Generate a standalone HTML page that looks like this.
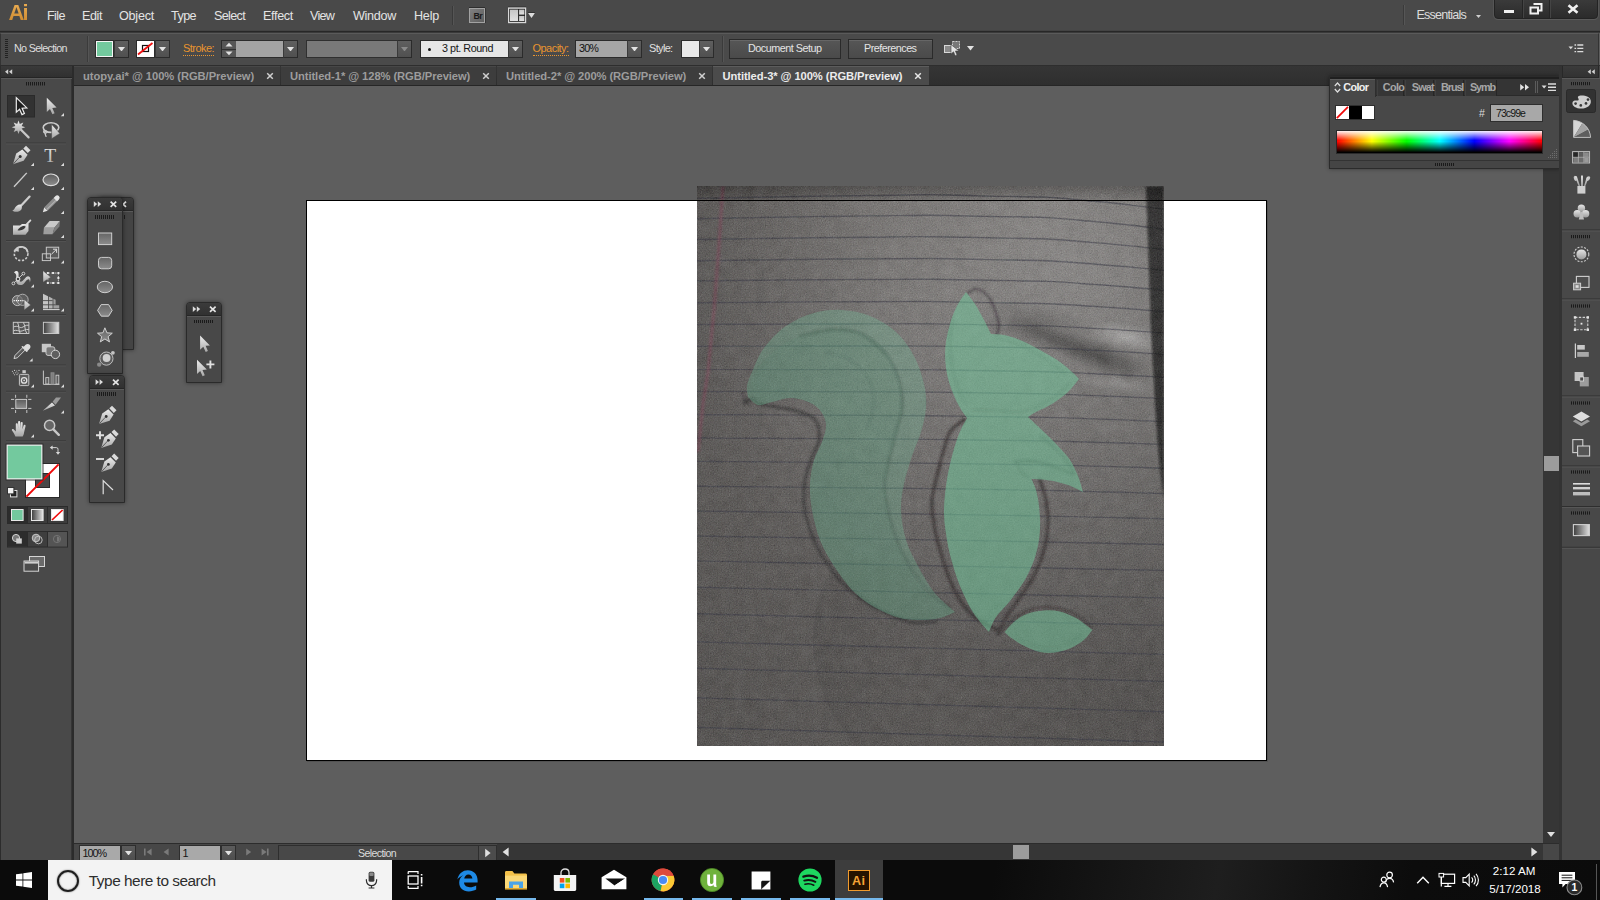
<!DOCTYPE html>
<html>
<head>
<meta charset="utf-8">
<title>Ai</title>
<style>
*{box-sizing:border-box;margin:0;padding:0}
html,body{width:1600px;height:900px;overflow:hidden;background:#5e5e5e;font-family:"Liberation Sans",sans-serif;}
.abs{position:absolute}
#root{position:absolute;left:0;top:0;width:1600px;height:900px;overflow:hidden;background:#5e5e5e}
.t{position:absolute;white-space:nowrap;line-height:1;color:#e6e6e6}
/* bars */
#menubar{left:0;top:0;width:1600px;height:31px;background:#494949}
#menuline{left:0;top:30px;width:1600px;height:3px;background:linear-gradient(#434343 0 1px,#272727 1px 2px,#3a3a3a 2px 3px)}
#ctrlbar{left:0;top:33px;width:1599px;height:32px;background:#4a4a4a;border-left:1px solid #333;border-top:1px solid #5a5a5a;border-right:1px solid #333}
#ctrlline{left:0;top:65px;width:1600px;height:1px;background:#2e2e2e}
#tabbar{left:74px;top:66px;width:1485px;height:20px;background:linear-gradient(#353535,#2e2e2e)}
.tab{position:absolute;top:0;height:19px;background:#3b3b3b;border-right:1px solid #2a2a2a}
.tab.on{background:#4b4b4b}
#toolbar{left:0;top:66px;width:72px;height:794px;background:#494949;border-right:1px solid #353535}
#tbgap{left:72px;top:66px;width:2px;height:794px;background:#2b2b2b}
#tbhead{left:0;top:66px;width:72px;height:13px;background:linear-gradient(#3a3a3a 0,#303030 11px,#242424 11px,#242424 12px,#585858 12px)}
#canvas{left:74px;top:86px;width:1468px;height:757px;background:#5e5e5e}
#artboard{left:306px;top:200px;width:961px;height:561px;background:#fff}
#statusbar{left:74px;top:843px;width:1485px;height:17px;background:#474747;border-top:1px solid #2c2c2c}
#vscroll{left:1543px;top:86px;width:16px;height:757px;background:#363636}
#dock{left:1562px;top:66px;width:38px;height:794px;background:#484848}
#dockgap{left:1559px;top:66px;width:3px;height:794px;background:#333}
#taskbar{left:0;top:860px;width:1600px;height:40px;background:#0e0e0e}
</style>
</head>
<body>
<div id="root">
<!-- MENUBAR -->
<div id="menubar" class="abs"></div>
<div id="menuline" class="abs"></div>
<span class="t" style="left:8.5px;top:2.4px;font-size:22px;font-weight:bold;letter-spacing:-1.9px;background:linear-gradient(#edb055,#c9852c);-webkit-background-clip:text;background-clip:text;color:transparent;">Ai</span>
<span class="t" style="left:47.0px;top:10.1px;font-size:12.6px;letter-spacing:-0.58px;color:#e4e4e4;">File</span>
<span class="t" style="left:82.0px;top:10.1px;font-size:12.6px;letter-spacing:-0.43px;color:#e4e4e4;">Edit</span>
<span class="t" style="left:119.0px;top:10.1px;font-size:12.6px;letter-spacing:-0.24px;color:#e4e4e4;">Object</span>
<span class="t" style="left:171.0px;top:10.1px;font-size:12.6px;letter-spacing:-0.58px;color:#e4e4e4;">Type</span>
<span class="t" style="left:214.0px;top:10.1px;font-size:12.6px;letter-spacing:-0.67px;color:#e4e4e4;">Select</span>
<span class="t" style="left:263.0px;top:10.1px;font-size:12.6px;letter-spacing:-0.33px;color:#e4e4e4;">Effect</span>
<span class="t" style="left:310.0px;top:10.1px;font-size:12.6px;letter-spacing:-0.77px;color:#e4e4e4;">View</span>
<span class="t" style="left:353.0px;top:10.1px;font-size:12.6px;letter-spacing:-0.30px;color:#e4e4e4;">Window</span>
<span class="t" style="left:414.0px;top:10.1px;font-size:12.6px;letter-spacing:-0.23px;color:#e4e4e4;">Help</span>
<div class="abs" style="left:452px;top:6px;width:1px;height:19px;background:#3a3a3a;"></div>
<div class="abs" style="left:453px;top:6px;width:1px;height:19px;background:#555;"></div>
<div class="abs" style="left:469px;top:7.5px;width:16px;height:15.5px;background:linear-gradient(135deg,#808080,#5e5e5e);border:1px solid #a2a2a2;box-shadow:0 -1px 0 #2e2e2e,1px 0 0 #333"></div>
<span class="t" style="left:473.6px;top:11.5px;font-size:8.8px;letter-spacing:-0.79px;color:#1a1a1a;font-weight:bold;">Br</span>
<svg class="abs" style="left:507px;top:6px" width="30" height="19" viewBox="507 6 30 19"><defs><linearGradient id="arg" x1="0" y1="0" x2="0" y2="1"><stop offset="0" stop-color="#c4c4c4"/><stop offset="1" stop-color="#e0e0e0"/></linearGradient></defs><rect x="508" y="6.6" width="18.2" height="1" fill="#2c2c2c"/><rect x="508" y="7.4" width="18.2" height="15.8" fill="#d8d8d8"/><rect x="509.2" y="8.8" width="15.8" height="13" fill="#1e1e1e"/><rect x="509.9" y="9.6" width="8.2" height="11.4" fill="url(#arg)"/><rect x="519.1" y="9.6" width="5.3" height="5" fill="url(#arg)"/><rect x="519.1" y="15.9" width="5.3" height="5.1" fill="url(#arg)"/><path d="M528,12.2h7v0.8h-7z" fill="#2e2e2e"/><path d="M528.1,12.9h6.8l-3.4,5z" fill="#dcdcdc"/></svg>
<div class="abs" style="left:1403px;top:5px;width:1px;height:20px;background:#3a3a3a;"></div>
<div class="abs" style="left:1404px;top:5px;width:1px;height:20px;background:#565656;"></div>
<span class="t" style="left:1416.5px;top:8.5px;font-size:12.6px;letter-spacing:-0.79px;color:#dcdcdc;">Essentials</span>
<svg class="abs" style="left:1476.0px;top:14.8px" width="5" height="3" viewBox="0 0 5 3"><path d="M0,0H5L2.5,3Z" fill="#cfcfcf"/></svg>
<div class="abs" style="left:1494px;top:-3px;width:104px;height:22px;border-radius:0 0 4px 4px;background:linear-gradient(#3c3c3c,#2b2b2b);border:1px solid #232323;box-shadow:0 1px 0 #5a5a5a, 1px 0 0 #555, -1px 0 0 #555"></div>
<div class="abs" style="left:1522px;top:0px;width:1px;height:18px;background:#242424;"></div>
<div class="abs" style="left:1523px;top:0px;width:1px;height:18px;background:#444;"></div>
<div class="abs" style="left:1549px;top:0px;width:1px;height:18px;background:#242424;"></div>
<div class="abs" style="left:1550px;top:0px;width:1px;height:18px;background:#444;"></div>
<div class="abs" style="left:1504px;top:10px;width:10px;height:3px;background:#f0f0f0;"></div>
<svg class="abs" style="left:1529px;top:3px" width="14" height="12" viewBox="0 0 14 12"><path d="M4.5,1h8v6.5h-2.5" fill="none" stroke="#f0f0f0" stroke-width="2"/><rect x="1.5" y="4.5" width="7.5" height="6" fill="none" stroke="#f0f0f0" stroke-width="2"/></svg>
<svg class="abs" style="left:1567px;top:4px" width="12" height="10" viewBox="0 0 12 10"><path d="M1.5,1.2L10.5,8.8M10.5,1.2L1.5,8.8" stroke="#f0f0f0" stroke-width="2.6" fill="none"/></svg>
<div id="ctrlbar" class="abs"></div>
<div id="ctrlline" class="abs"></div>
<div class="abs" style="left:5px;top:39px;width:3px;height:20px;background:repeating-linear-gradient(#222 0 1px,transparent 1px 2px)"></div>
<span class="t" style="left:14.0px;top:42.9px;font-size:10.8px;letter-spacing:-0.69px;color:#dedede;">No Selection</span>
<div class="abs" style="left:87px;top:36px;width:1px;height:26px;background:#3b3b3b;"></div>
<div class="abs" style="left:88px;top:36px;width:1px;height:26px;background:#555;"></div>
<div class="abs" style="left:96px;top:41px;width:16.5px;height:16px;background:#73c99e;border:1px solid #f4f4f4;outline:1px solid #2b2b2b;outline-offset:0"></div>
<div class="abs" style="left:113.5px;top:40px;width:15.5px;height:18px;background:linear-gradient(#5f5f5f,#505050);border:1px solid #2b2b2b;border-left:1px solid #3a3a3a"></div><svg class="abs" style="left:118.0px;top:46.8px" width="7" height="4.5" viewBox="0 0 7 4.5"><path d="M0,0H7L3.5,4.5Z" fill="#e2e2e2"/></svg>
<div class="abs" style="left:137px;top:41px;width:17px;height:16px;background:#fff;outline:1px solid #2b2b2b"></div>
<svg class="abs" style="left:136px;top:40px" width="19" height="18" viewBox="0 0 19 18"><rect x="6.5" y="5.5" width="6" height="6" fill="none" stroke="#111" stroke-width="1.2"/><path d="M2,14.5L16.5,3" stroke="#f01010" stroke-width="1.8"/></svg>
<div class="abs" style="left:154.5px;top:40px;width:15.5px;height:18px;background:linear-gradient(#5f5f5f,#505050);border:1px solid #2b2b2b;border-left:1px solid #3a3a3a"></div><svg class="abs" style="left:159.1px;top:46.8px" width="7" height="4.5" viewBox="0 0 7 4.5"><path d="M0,0H7L3.5,4.5Z" fill="#e2e2e2"/></svg>
<span class="t" style="left:183.0px;top:42.7px;font-size:11px;letter-spacing:-0.55px;color:#e9952f;border-bottom:1px dotted #e9952f;padding-bottom:1px;">Stroke:</span>
<div class="abs" style="left:221px;top:40px;width:16px;height:18px;background:#565656;border:1px solid #2b2b2b"></div>
<div class="abs" style="left:222px;top:48.5px;width:14px;height:1px;background:#2f2f2f;"></div>
<svg class="abs" style="left:225px;top:42px" width="8" height="14" viewBox="0 0 8 14"><path d="M0.5,4.5h7L4,0.8z" fill="#e2e2e2"/><path d="M0.5,9.5h7L4,13.2z" fill="#e2e2e2"/></svg>
<div class="abs" style="left:236px;top:40px;width:48px;height:18px;background:#a3a3a3;border:1px solid #2b2b2b;border-left:none"></div>
<div class="abs" style="left:283px;top:40px;width:15px;height:18px;background:linear-gradient(#5f5f5f,#505050);border:1px solid #2b2b2b;border-left:1px solid #3a3a3a"></div><svg class="abs" style="left:287.3px;top:46.8px" width="7" height="4.5" viewBox="0 0 7 4.5"><path d="M0,0H7L3.5,4.5Z" fill="#e2e2e2"/></svg>
<div class="abs" style="left:306px;top:40px;width:92px;height:18px;background:#797979;border:1px solid #2f2f2f"></div>
<div class="abs" style="left:397px;top:40px;width:15px;height:18px;background:linear-gradient(#5f5f5f,#505050);border:1px solid #2b2b2b;border-left:1px solid #3a3a3a"></div><svg class="abs" style="left:401.3px;top:46.8px" width="7" height="4.5" viewBox="0 0 7 4.5"><path d="M0,0H7L3.5,4.5Z" fill="#8a8a8a"/></svg>
<div class="abs" style="left:420px;top:40px;width:89px;height:18px;background:#e6e6e6;border:1px solid #2b2b2b"></div>
<div class="abs" style="left:427.5px;top:47.5px;width:3px;height:3px;border-radius:2px;background:#111"></div>
<span class="t" style="left:442.0px;top:42.9px;font-size:10.8px;letter-spacing:-0.44px;color:#161616;">3 pt. Round</span>
<div class="abs" style="left:508px;top:40px;width:15px;height:18px;background:linear-gradient(#5f5f5f,#505050);border:1px solid #2b2b2b;border-left:1px solid #3a3a3a"></div><svg class="abs" style="left:512.3px;top:46.8px" width="7" height="4.5" viewBox="0 0 7 4.5"><path d="M0,0H7L3.5,4.5Z" fill="#e2e2e2"/></svg>
<span class="t" style="left:532.5px;top:42.7px;font-size:11px;letter-spacing:-0.54px;color:#e9952f;border-bottom:1px dotted #e9952f;padding-bottom:1px;">Opacity:</span>
<div class="abs" style="left:575px;top:40px;width:53px;height:18px;background:#a6a6a6;border:1px solid #2b2b2b"></div>
<span class="t" style="left:579.0px;top:42.9px;font-size:10.8px;letter-spacing:-0.87px;color:#111;">30%</span>
<div class="abs" style="left:627px;top:40px;width:15px;height:18px;background:linear-gradient(#5f5f5f,#505050);border:1px solid #2b2b2b;border-left:1px solid #3a3a3a"></div><svg class="abs" style="left:631.3px;top:46.8px" width="7" height="4.5" viewBox="0 0 7 4.5"><path d="M0,0H7L3.5,4.5Z" fill="#e2e2e2"/></svg>
<span class="t" style="left:649.0px;top:42.7px;font-size:11px;letter-spacing:-0.67px;color:#e0e0e0;">Style:</span>
<div class="abs" style="left:681px;top:40px;width:19px;height:18px;background:#e8e8e8;border:1px solid #2b2b2b"></div>
<div class="abs" style="left:699px;top:40px;width:15px;height:18px;background:linear-gradient(#5f5f5f,#505050);border:1px solid #2b2b2b;border-left:1px solid #3a3a3a"></div><svg class="abs" style="left:703.3px;top:46.8px" width="7" height="4.5" viewBox="0 0 7 4.5"><path d="M0,0H7L3.5,4.5Z" fill="#e2e2e2"/></svg>
<div class="abs" style="left:722px;top:36px;width:1px;height:26px;background:#3b3b3b;"></div>
<div class="abs" style="left:723px;top:36px;width:1px;height:26px;background:#555;"></div>
<div class="abs" style="left:729px;top:39px;width:112px;height:20px;background:linear-gradient(#565656,#4a4a4a);border:1px solid #2a2a2a;box-shadow:inset 0 1px 0 #666"></div>
<span class="t" style="left:748.0px;top:42.9px;font-size:10.8px;letter-spacing:-0.50px;color:#e4e4e4;">Document Setup</span>
<div class="abs" style="left:848px;top:39px;width:85px;height:20px;background:linear-gradient(#565656,#4a4a4a);border:1px solid #2a2a2a;box-shadow:inset 0 1px 0 #666"></div>
<span class="t" style="left:864.0px;top:42.9px;font-size:10.8px;letter-spacing:-0.52px;color:#e4e4e4;">Preferences</span>
<svg class="abs" style="left:943px;top:40px" width="20" height="18" viewBox="0 0 20 18"><rect x="1.5" y="5.5" width="7" height="7" fill="#8a8a8a" stroke="#d8d8d8"/><rect x="9.5" y="1.5" width="7" height="7" fill="#777" stroke="#d0d0d0" stroke-dasharray="2 1"/><path d="M8,4.5l8,6.5h-3.6l1.6,4l-1.8,0.8l-1.7,-4l-2.5,2.3z" fill="#e4e4e4" stroke="#444" stroke-width="0.6"/></svg>
<svg class="abs" style="left:967.0px;top:46.2px" width="7" height="4.5" viewBox="0 0 7 4.5"><path d="M0,0H7L3.5,4.5Z" fill="#e2e2e2"/></svg>
<svg class="abs" style="left:1568px;top:44px" width="16" height="9" viewBox="0 0 16 9"><path d="M0.5,2.5h4.6l-2.3,2.8z" fill="#dcdcdc"/><path d="M6.5,1h1.6M9.3,1h6M6.5,4.3h1.6M9.3,4.3h6M6.5,7.6h1.6M9.3,7.6h6" stroke="#dcdcdc" stroke-width="1.3"/></svg>
<!-- CANVAS -->
<div id="canvas" class="abs"></div>
<div id="artboard" class="abs"></div>
<svg class="abs" style="left:697px;top:186px" width="467" height="560" viewBox="697 186 467 560">
<defs>
<radialGradient id="hl" gradientUnits="userSpaceOnUse" cx="1080" cy="275" r="400"><stop offset="0" stop-color="#fff" stop-opacity="0.25"/><stop offset="0.5" stop-color="#fff" stop-opacity="0.13"/><stop offset="1" stop-color="#fff" stop-opacity="0"/></radialGradient>
<linearGradient id="dk" gradientUnits="userSpaceOnUse" x1="800" y1="420" x2="1100" y2="760"><stop offset="0" stop-color="#000" stop-opacity="0"/><stop offset="1" stop-color="#000" stop-opacity="0.2"/></linearGradient>
<linearGradient id="lf" gradientUnits="userSpaceOnUse" x1="697" y1="0" x2="880" y2="0"><stop offset="0" stop-color="#000" stop-opacity="0.12"/><stop offset="1" stop-color="#000" stop-opacity="0"/></linearGradient>
<radialGradient id="sp" cx="0.5" cy="0.5" r="0.5"><stop offset="0" stop-color="#fff" stop-opacity="1"/><stop offset="1" stop-color="#fff" stop-opacity="0"/></radialGradient>
<radialGradient id="sd" cx="0.5" cy="0.5" r="0.5"><stop offset="0" stop-color="#000" stop-opacity="1"/><stop offset="1" stop-color="#000" stop-opacity="0"/></radialGradient>
<linearGradient id="edgeT" x1="0" x2="0" y1="0" y2="1"><stop offset="0" stop-color="#000" stop-opacity="0.22"/><stop offset="1" stop-color="#000" stop-opacity="0"/></linearGradient>
<filter id="grain" x="0" y="0" width="100%" height="100%" color-interpolation-filters="sRGB"><feTurbulence type="fractalNoise" baseFrequency="0.75" numOctaves="2" seed="7" result="n"/><feColorMatrix in="n" type="matrix" values="0.4 0.35 0.25 0 0  0.3 0.45 0.25 0 0  0.3 0.35 0.35 0 0  0 0 0 0 1" result="n2"/><feComposite in="SourceGraphic" in2="n2" operator="arithmetic" k1="0" k2="1" k3="0.3" k4="-0.15" result="g1"/><feTurbulence type="fractalNoise" baseFrequency="0.09" numOctaves="2" seed="11" result="m"/><feColorMatrix in="m" type="matrix" values="0.34 0.33 0.33 0 0  0.33 0.34 0.33 0 0  0.33 0.33 0.34 0 0  0 0 0 0 1" result="m2"/><feComposite in="g1" in2="m2" operator="arithmetic" k1="0" k2="1" k3="0.1" k4="-0.05"/></filter>
<filter id="b1"><feGaussianBlur stdDeviation="1.2"/></filter>
<filter id="b2"><feGaussianBlur stdDeviation="0.6"/></filter>
<filter id="b3"><feGaussianBlur stdDeviation="1.3"/></filter>
</defs>
<g opacity="0.93"><g filter="url(#grain)">
<rect x="697" y="186" width="467" height="560" fill="#5c5957"/>
<rect x="697" y="186" width="467" height="560" fill="url(#hl)"/>
<rect x="697" y="186" width="467" height="560" fill="url(#dk)"/>
<rect x="697" y="186" width="467" height="560" fill="url(#lf)"/>
<ellipse cx="1128" cy="337" rx="40" ry="14" transform="rotate(14 1128 337)" fill="url(#sp)" opacity="0.32"/>
<ellipse cx="1118" cy="384" rx="40" ry="9" transform="rotate(8 1118 384)" fill="url(#sp)" opacity="0.14"/>
<ellipse cx="1098" cy="356" rx="58" ry="16" transform="rotate(20 1098 356)" fill="url(#sd)" opacity="0.42"/>
<ellipse cx="1050" cy="338" rx="50" ry="12" transform="rotate(22 1050 338)" fill="url(#sd)" opacity="0.22"/>
<ellipse cx="1036" cy="326" rx="62" ry="24" transform="rotate(10 1036 326)" fill="url(#sd)" opacity="0.2"/>
<g fill="none" stroke="#2c2e3a" stroke-opacity="0.5" stroke-width="1.4" filter="url(#b2)">
<path d="M697.0,198.4C706.7,198.2 735.9,197.7 755.4,197.3C774.8,197.0 794.3,196.5 813.8,196.2C833.2,195.9 852.7,195.8 872.1,195.5C891.6,195.3 911.0,194.7 930.5,194.8C950.0,194.9 969.4,195.7 988.9,196.1C1008.3,196.5 1029.7,196.5 1047.2,197.3C1064.8,198.2 1079.9,200.0 1094.0,201.3C1108.0,202.6 1119.6,203.7 1131.3,205.1C1143.0,206.4 1158.6,208.5 1164.0,209.2"/>
<path d="M697.0,218.7C706.7,218.5 735.9,218.0 755.4,217.6C774.8,217.3 794.3,216.9 813.8,216.6C833.2,216.3 852.7,216.1 872.1,215.9C891.6,215.7 911.0,215.1 930.5,215.2C950.0,215.3 969.4,216.0 988.9,216.4C1008.3,216.8 1029.7,216.8 1047.2,217.6C1064.8,218.5 1079.9,220.3 1094.0,221.5C1108.0,222.8 1119.6,223.9 1131.3,225.2C1143.0,226.5 1158.6,228.5 1164.0,229.2"/>
<path d="M697.0,239.5C706.7,239.4 735.9,238.9 755.4,238.6C774.8,238.3 794.3,238.0 813.8,237.7C833.2,237.5 852.7,237.4 872.1,237.2C891.6,237.0 911.0,236.5 930.5,236.7C950.0,236.8 969.4,237.4 988.9,237.8C1008.3,238.2 1029.7,238.2 1047.2,239.0C1064.8,239.8 1079.9,241.4 1094.0,242.6C1108.0,243.7 1119.6,244.7 1131.3,245.9C1143.0,247.1 1158.6,249.0 1164.0,249.6"/>
<path d="M697.0,260.7C706.7,260.6 735.9,260.2 755.4,260.0C774.8,259.8 794.3,259.5 813.8,259.3C833.2,259.1 852.7,259.0 872.1,258.9C891.6,258.7 911.0,258.4 930.5,258.5C950.0,258.6 969.4,259.2 988.9,259.6C1008.3,260.0 1029.7,260.0 1047.2,260.7C1064.8,261.5 1079.9,262.9 1094.0,264.0C1108.0,265.1 1119.6,266.0 1131.3,267.1C1143.0,268.1 1158.6,269.9 1164.0,270.4"/>
<path d="M697.0,280.9C706.7,280.8 735.9,280.5 755.4,280.3C774.8,280.2 794.3,279.9 813.8,279.8C833.2,279.7 852.7,279.6 872.1,279.5C891.6,279.4 911.0,279.1 930.5,279.2C950.0,279.4 969.4,280.0 988.9,280.3C1008.3,280.7 1029.7,280.7 1047.2,281.4C1064.8,282.1 1079.9,283.4 1094.0,284.4C1108.0,285.4 1119.6,286.2 1131.3,287.2C1143.0,288.2 1158.6,289.8 1164.0,290.3"/>
<path d="M697.0,302.7C706.7,302.6 735.9,302.4 755.4,302.3C774.8,302.2 794.3,302.0 813.8,301.9C833.2,301.8 852.7,301.8 872.1,301.7C891.6,301.7 911.0,301.4 930.5,301.6C950.0,301.7 969.4,302.3 988.9,302.6C1008.3,303.0 1029.7,303.1 1047.2,303.7C1064.8,304.3 1079.9,305.5 1094.0,306.4C1108.0,307.3 1119.6,308.0 1131.3,308.9C1143.0,309.8 1158.6,311.2 1164.0,311.7"/>
<path d="M697.0,324.5C706.7,324.5 735.9,324.3 755.4,324.2C774.8,324.2 794.3,324.0 813.8,324.0C833.2,323.9 852.7,324.0 872.1,323.9C891.6,323.9 911.0,323.7 930.5,323.9C950.0,324.1 969.4,324.6 988.9,324.9C1008.3,325.2 1029.7,325.3 1047.2,325.9C1064.8,326.5 1079.9,327.6 1094.0,328.4C1108.0,329.1 1119.6,329.8 1131.3,330.6C1143.0,331.4 1158.6,332.7 1164.0,333.1"/>
<path d="M697.0,346.2C706.7,346.2 735.9,346.1 755.4,346.1C774.8,346.0 794.3,346.0 813.8,346.0C833.2,345.9 852.7,346.0 872.1,346.0C891.6,346.0 911.0,345.9 930.5,346.1C950.0,346.2 969.4,346.7 988.9,347.0C1008.3,347.4 1029.7,347.5 1047.2,348.0C1064.8,348.5 1079.9,349.5 1094.0,350.2C1108.0,350.9 1119.6,351.5 1131.3,352.2C1143.0,352.9 1158.6,354.0 1164.0,354.4"/>
<path d="M697.0,369.6C706.7,369.6 735.9,369.6 755.4,369.6C774.8,369.6 794.3,369.6 813.8,369.6C833.2,369.6 852.7,369.7 872.1,369.8C891.6,369.8 911.0,369.7 930.5,369.9C950.0,370.1 969.4,370.5 988.9,370.8C1008.3,371.1 1029.7,371.3 1047.2,371.8C1064.8,372.2 1079.9,373.1 1094.0,373.7C1108.0,374.3 1119.6,374.8 1131.3,375.5C1143.0,376.1 1158.6,377.0 1164.0,377.4"/>
<path d="M697.0,391.4C706.7,391.4 735.9,391.5 755.4,391.5C774.8,391.5 794.3,391.6 813.8,391.6C833.2,391.7 852.7,391.8 872.1,391.9C891.6,391.9 911.0,391.9 930.5,392.1C950.0,392.3 969.4,392.7 988.9,393.0C1008.3,393.3 1029.7,393.4 1047.2,393.9C1064.8,394.3 1079.9,395.0 1094.0,395.6C1108.0,396.1 1119.6,396.6 1131.3,397.1C1143.0,397.6 1158.6,398.5 1164.0,398.8"/>
<path d="M697.0,414.7C706.7,414.7 735.9,414.8 755.4,414.9C774.8,415.0 794.3,415.0 813.8,415.1C833.2,415.2 852.7,415.3 872.1,415.4C891.6,415.5 911.0,415.6 930.5,415.8C950.0,415.9 969.4,416.3 988.9,416.6C1008.3,416.9 1029.7,417.0 1047.2,417.4C1064.8,417.8 1079.9,418.4 1094.0,418.9C1108.0,419.4 1119.6,419.8 1131.3,420.2C1143.0,420.7 1158.6,421.4 1164.0,421.6"/>
<path d="M697.0,438.0C706.7,438.1 735.9,438.2 755.4,438.3C774.8,438.4 794.3,438.5 813.8,438.6C833.2,438.7 852.7,438.9 872.1,439.0C891.6,439.1 911.0,439.2 930.5,439.4C950.0,439.6 969.4,439.9 988.9,440.2C1008.3,440.4 1029.7,440.6 1047.2,440.9C1064.8,441.3 1079.9,441.8 1094.0,442.2C1108.0,442.6 1119.6,442.9 1131.3,443.3C1143.0,443.7 1158.6,444.3 1164.0,444.5"/>
<path d="M697.0,461.4C706.7,461.5 735.9,461.7 755.4,461.8C774.8,462.0 794.3,462.1 813.8,462.3C833.2,462.4 852.7,462.6 872.1,462.8C891.6,462.9 911.0,463.0 930.5,463.2C950.0,463.5 969.4,463.8 988.9,464.1C1008.3,464.4 1029.7,464.6 1047.2,464.9C1064.8,465.3 1079.9,465.8 1094.0,466.1C1108.0,466.5 1119.6,466.9 1131.3,467.2C1143.0,467.6 1158.6,468.1 1164.0,468.3"/>
<path d="M697.0,486.2C706.7,486.3 735.9,486.6 755.4,486.8C774.8,487.0 794.3,487.2 813.8,487.4C833.2,487.6 852.7,487.8 872.1,488.0C891.6,488.2 911.0,488.4 930.5,488.6C950.0,488.9 969.4,489.2 988.9,489.5C1008.3,489.8 1029.7,490.1 1047.2,490.4C1064.8,490.8 1079.9,491.2 1094.0,491.6C1108.0,491.9 1119.6,492.2 1131.3,492.6C1143.0,492.9 1158.6,493.4 1164.0,493.6"/>
<path d="M697.0,511.1C706.7,511.2 735.9,511.6 755.4,511.8C774.8,512.1 794.3,512.3 813.8,512.6C833.2,512.8 852.7,513.1 872.1,513.4C891.6,513.6 911.0,513.9 930.5,514.1C950.0,514.4 969.4,514.8 988.9,515.1C1008.3,515.4 1029.7,515.7 1047.2,516.1C1064.8,516.4 1079.9,516.8 1094.0,517.1C1108.0,517.5 1119.6,517.7 1131.3,518.0C1143.0,518.3 1158.6,518.8 1164.0,518.9"/>
<path d="M697.0,536.0C706.7,536.2 735.9,536.6 755.4,537.0C774.8,537.3 794.3,537.6 813.8,537.9C833.2,538.2 852.7,538.6 872.1,538.9C891.6,539.2 911.0,539.5 930.5,539.9C950.0,540.2 969.4,540.6 988.9,540.9C1008.3,541.3 1029.7,541.6 1047.2,542.0C1064.8,542.3 1079.9,542.7 1094.0,543.0C1108.0,543.3 1119.6,543.5 1131.3,543.8C1143.0,544.1 1158.6,544.4 1164.0,544.5"/>
<path d="M697.0,560.9C706.7,561.1 735.9,561.7 755.4,562.1C774.8,562.5 794.3,562.9 813.8,563.3C833.2,563.7 852.7,564.1 872.1,564.5C891.6,564.9 911.0,565.3 930.5,565.7C950.0,566.1 969.4,566.5 988.9,566.9C1008.3,567.2 1029.7,567.7 1047.2,568.0C1064.8,568.4 1079.9,568.7 1094.0,569.0C1108.0,569.3 1119.6,569.5 1131.3,569.8C1143.0,570.0 1158.6,570.3 1164.0,570.4"/>
<path d="M697.0,587.3C706.7,587.5 735.9,588.2 755.4,588.6C774.8,589.1 794.3,589.5 813.8,589.9C833.2,590.4 852.7,590.8 872.1,591.3C891.6,591.7 911.0,592.1 930.5,592.6C950.0,593.0 969.4,593.5 988.9,593.9C1008.3,594.3 1029.7,594.8 1047.2,595.2C1064.8,595.6 1079.9,596.0 1094.0,596.3C1108.0,596.6 1119.6,596.9 1131.3,597.1C1143.0,597.4 1158.6,597.7 1164.0,597.9"/>
<path d="M697.0,613.8C706.7,614.0 735.9,614.8 755.4,615.2C774.8,615.7 794.3,616.2 813.8,616.7C833.2,617.2 852.7,617.7 872.1,618.1C891.6,618.6 911.0,619.1 930.5,619.6C950.0,620.1 969.4,620.6 988.9,621.0C1008.3,621.5 1029.7,622.1 1047.2,622.5C1064.8,622.9 1079.9,623.3 1094.0,623.7C1108.0,624.0 1119.6,624.3 1131.3,624.6C1143.0,624.9 1158.6,625.3 1164.0,625.4"/>
<path d="M697.0,641.8C706.7,642.1 735.9,642.9 755.4,643.4C774.8,643.9 794.3,644.4 813.8,645.0C833.2,645.5 852.7,646.0 872.1,646.5C891.6,647.1 911.0,647.6 930.5,648.1C950.0,648.7 969.4,649.2 988.9,649.7C1008.3,650.2 1029.7,650.8 1047.2,651.3C1064.8,651.8 1079.9,652.2 1094.0,652.6C1108.0,652.9 1119.6,653.2 1131.3,653.6C1143.0,653.9 1158.6,654.3 1164.0,654.4"/>
<path d="M697.0,668.2C706.7,668.5 735.9,669.3 755.4,669.9C774.8,670.4 794.3,671.0 813.8,671.5C833.2,672.1 852.7,672.6 872.1,673.2C891.6,673.7 911.0,674.3 930.5,674.8C950.0,675.4 969.4,675.9 988.9,676.5C1008.3,677.0 1029.7,677.6 1047.2,678.1C1064.8,678.6 1079.9,679.1 1094.0,679.5C1108.0,679.9 1119.6,680.2 1131.3,680.5C1143.0,680.8 1158.6,681.3 1164.0,681.4"/>
<path d="M697.0,697.8C706.7,698.1 735.9,699.0 755.4,699.5C774.8,700.1 794.3,700.7 813.8,701.3C833.2,701.9 852.7,702.4 872.1,703.0C891.6,703.6 911.0,704.2 930.5,704.8C950.0,705.3 969.4,705.9 988.9,706.5C1008.3,707.1 1029.7,707.7 1047.2,708.2C1064.8,708.8 1079.9,709.2 1094.0,709.6C1108.0,710.0 1119.6,710.4 1131.3,710.7C1143.0,711.1 1158.6,711.6 1164.0,711.7"/>
<path d="M697.0,727.4C706.7,727.7 735.9,728.6 755.4,729.2C774.8,729.8 794.3,730.4 813.8,731.0C833.2,731.7 852.7,732.3 872.1,732.9C891.6,733.5 911.0,734.1 930.5,734.7C950.0,735.3 969.4,735.9 988.9,736.5C1008.3,737.1 1029.7,737.8 1047.2,738.3C1064.8,738.9 1079.9,739.4 1094.0,739.8C1108.0,740.2 1119.6,740.6 1131.3,741.0C1143.0,741.3 1158.6,741.8 1164.0,742.0"/>
</g>
<path d="M723,186 L718.8,248 L714,310 L708,372 L703,404 L698,452" fill="none" stroke="#70404e" stroke-opacity="0.7" stroke-width="3" filter="url(#b1)"/>
<path d="M1146,186 L1164,186 L1164,500 L1160,470 L1156,420 L1151,330 Z" fill="#0a0a0a" opacity="0.72" filter="url(#b3)"/>
<rect x="697" y="186" width="467" height="14" fill="url(#edgeT)"/>
<defs><linearGradient id="cg" gradientUnits="userSpaceOnUse" x1="813" y1="0" x2="940" y2="0"><stop offset="0" stop-color="#000" stop-opacity="0.075"/><stop offset="1" stop-color="#000" stop-opacity="0"/></linearGradient><clipPath id="cc"><rect x="697" y="560" width="263" height="186"/></clipPath></defs><circle cx="960" cy="640" r="147" fill="url(#cg)" clip-path="url(#cc)"/>
<path d="M748.0,397.0C748.3,394.8 748.0,389.2 750.0,384.0C752.0,378.8 755.3,372.0 760.0,366.0C764.7,360.0 771.3,353.0 778.0,348.0C784.7,343.0 791.3,339.2 800.0,336.0C808.7,332.8 820.7,329.8 830.0,329.0C839.3,328.2 848.0,328.7 856.0,331.0C864.0,333.3 871.8,337.7 878.0,343.0C884.2,348.3 889.2,355.5 893.0,363.0C896.8,370.5 899.5,380.2 901.0,388.0C902.5,395.8 902.7,402.3 902.0,410.0C901.3,417.7 899.0,426.0 897.0,434.0C895.0,442.0 891.8,449.7 890.0,458.0C888.2,466.3 886.5,475.7 886.0,484.0C885.5,492.3 885.7,499.3 887.0,508.0C888.3,516.7 890.8,527.0 894.0,536.0C897.2,545.0 901.3,553.3 906.0,562.0C910.7,570.7 913.8,579.7 922.0,588.0C930.2,596.3 949.5,608.0 955.0,612.0C952.5,613.0 945.2,616.7 940.0,618.0C934.8,619.3 930.7,620.0 924.0,620.0C917.3,620.0 908.0,620.0 900.0,618.0C892.0,616.0 883.7,612.3 876.0,608.0C868.3,603.7 861.0,599.0 854.0,592.0C847.0,585.0 839.7,574.7 834.0,566.0C828.3,557.3 823.7,549.3 820.0,540.0C816.3,530.7 813.7,519.3 812.0,510.0C810.3,500.7 809.7,492.3 810.0,484.0C810.3,475.7 812.0,467.0 814.0,460.0C816.0,453.0 820.0,448.0 822.0,442.0C824.0,436.0 826.5,429.5 826.0,424.0C825.5,418.5 822.3,412.8 819.0,409.0C815.7,405.2 810.8,402.8 806.0,401.0C801.2,399.2 795.7,397.8 790.0,398.0C784.3,398.2 777.3,400.8 772.0,402.0C766.7,403.2 762.0,405.8 758.0,405.0C754.0,404.2 749.7,398.3 748.0,397.0Z" fill="#000" opacity="0.075" filter="url(#b3)"/><g fill="none" stroke="#2a2628" stroke-linecap="round" filter="url(#b1)"><path d="M744.0,403.0C745.3,402.3 749.3,398.8 752.0,399.0C754.7,399.2 756.0,402.7 760.0,404.0C764.0,405.3 769.3,405.7 776.0,407.0C782.7,408.3 793.3,409.7 800.0,412.0C806.7,414.3 812.8,416.3 816.0,421.0C819.2,425.7 819.8,433.5 819.0,440.0C818.2,446.5 813.3,453.3 811.0,460.0C808.7,466.7 806.2,472.5 805.0,480.0C803.8,487.5 803.2,496.7 804.0,505.0C804.8,513.3 807.3,522.2 810.0,530.0C812.7,537.8 815.3,544.0 820.0,552.0C824.7,560.0 831.3,570.3 838.0,578.0C844.7,585.7 852.3,592.3 860.0,598.0C867.7,603.7 875.7,608.0 884.0,612.0C892.3,616.0 901.3,620.3 910.0,622.0C918.7,623.7 931.7,622.0 936.0,622.0" stroke-width="3.6" stroke-opacity="0.58"/>
<path d="M742.0,392.0C742.5,393.3 743.7,397.8 745.0,400.0C746.3,402.2 749.2,404.2 750.0,405.0" stroke-width="3" stroke-opacity="0.4"/>
<path d="M800.0,336.0C805.0,335.0 820.7,330.7 830.0,330.0C839.3,329.3 849.0,330.2 856.0,332.0C863.0,333.8 866.3,336.3 872.0,341.0C877.7,345.7 885.3,352.8 890.0,360.0C894.7,367.2 898.0,376.0 900.0,384.0C902.0,392.0 902.7,400.0 902.0,408.0C901.3,416.0 898.0,424.0 896.0,432.0C894.0,440.0 891.8,448.0 890.0,456.0C888.2,464.0 885.7,472.7 885.0,480.0C884.3,487.3 884.8,492.5 886.0,500.0C887.2,507.5 889.3,516.3 892.0,525.0C894.7,533.7 898.0,543.5 902.0,552.0C906.0,560.5 910.7,568.7 916.0,576.0C921.3,583.3 928.3,590.7 934.0,596.0C939.7,601.3 947.3,606.0 950.0,608.0" stroke-width="3.2" stroke-opacity="0.4"/>
<path d="M826.0,352.0C830.0,353.3 843.0,355.7 850.0,360.0C857.0,364.3 864.0,371.0 868.0,378.0C872.0,385.0 874.0,393.7 874.0,402.0C874.0,410.3 869.0,423.7 868.0,428.0" stroke-width="2.2" stroke-opacity="0.22"/>
<path d="M964.0,420.0C961.7,422.0 953.7,426.0 950.0,432.0C946.3,438.0 944.3,448.0 942.0,456.0C939.7,464.0 937.7,472.7 936.0,480.0C934.3,487.3 932.3,492.7 932.0,500.0C931.7,507.3 932.7,515.7 934.0,524.0C935.3,532.3 937.3,540.7 940.0,550.0C942.7,559.3 946.0,570.7 950.0,580.0C954.0,589.3 959.0,599.2 964.0,606.0C969.0,612.8 974.7,617.2 980.0,621.0C985.3,624.8 993.3,627.7 996.0,629.0" stroke-width="3.8" stroke-opacity="0.66"/>
<path d="M1040.0,480.0C1041.0,483.3 1044.7,492.7 1046.0,500.0C1047.3,507.3 1048.3,515.7 1048.0,524.0C1047.7,532.3 1046.3,541.3 1044.0,550.0C1041.7,558.7 1037.8,568.3 1034.0,576.0C1030.2,583.7 1025.3,589.7 1021.0,596.0C1016.7,602.3 1011.5,608.7 1008.0,614.0C1004.5,619.3 1001.7,624.7 1000.0,628.0C998.3,631.3 998.3,633.0 998.0,634.0" stroke-width="3.8" stroke-opacity="0.66"/>
<path d="M1000.0,633.0C1001.2,631.7 1004.1,627.8 1007.0,625.0C1009.9,622.2 1013.2,618.7 1017.5,616.0C1021.8,613.3 1027.5,610.5 1032.5,609.0C1037.5,607.5 1042.1,606.8 1047.5,607.0C1052.9,607.2 1059.9,608.5 1065.0,610.0C1070.1,611.5 1073.8,613.3 1078.0,616.0C1082.2,618.7 1088.0,624.3 1090.0,626.0" stroke-width="2.8" stroke-opacity="0.45"/>
<path d="M1014.0,634.0C1015.7,635.3 1019.7,639.8 1024.0,642.0C1028.3,644.2 1034.7,646.1 1040.0,647.0C1045.3,647.9 1051.0,648.2 1056.0,647.5C1061.0,646.8 1065.7,645.2 1070.0,643.0C1074.3,640.8 1080.0,635.5 1082.0,634.0" stroke-width="2" stroke-opacity="0.25"/>
<path d="M968.0,293.0C969.2,292.3 972.7,289.3 975.0,289.0C977.3,288.7 979.5,289.3 982.0,291.0C984.5,292.7 987.7,295.3 990.0,299.0C992.3,302.7 994.5,308.5 996.0,313.0C997.5,317.5 998.8,322.5 999.0,326.0C999.2,329.5 997.3,332.7 997.0,334.0" stroke-width="2.6" stroke-opacity="0.5"/>
<path d="M953.0,316.0C952.5,320.0 950.2,331.7 950.0,340.0C949.8,348.3 950.7,358.0 952.0,366.0C953.3,374.0 955.7,381.7 958.0,388.0C960.3,394.3 964.7,401.3 966.0,404.0" stroke-width="2.2" stroke-opacity="0.22"/>
<path d="M996.0,338.0C1000.0,339.2 1012.0,341.7 1020.0,345.0C1028.0,348.3 1036.3,353.2 1044.0,358.0C1051.7,362.8 1062.3,371.3 1066.0,374.0" stroke-width="2.2" stroke-opacity="0.2"/>
<path d="M1070.0,384.0C1067.0,386.3 1058.0,394.0 1052.0,398.0C1046.0,402.0 1040.0,405.7 1034.0,408.0C1028.0,410.3 1023.3,411.7 1016.0,412.0C1008.7,412.3 997.3,410.3 990.0,410.0C982.7,409.7 975.0,410.0 972.0,410.0" stroke-width="2.4" stroke-opacity="0.25"/>
<path d="M1014.0,462.0C1016.7,461.8 1024.7,460.7 1030.0,461.0C1035.3,461.3 1041.0,462.7 1046.0,464.0C1051.0,465.3 1055.5,467.3 1060.0,469.0C1064.5,470.7 1070.8,473.2 1073.0,474.0" stroke-width="2.8" stroke-opacity="0.38"/>
<path d="M1040.0,436.0C1042.3,437.8 1050.3,443.8 1054.0,447.0C1057.7,450.2 1059.3,451.8 1062.0,455.0C1064.7,458.2 1068.0,463.0 1070.0,466.0C1072.0,469.0 1073.3,471.8 1074.0,473.0" stroke-width="2.6" stroke-opacity="0.32"/>
<path d="M1016.0,463.0C1016.8,464.3 1019.0,468.5 1021.0,471.0C1023.0,473.5 1026.8,476.8 1028.0,478.0" stroke-width="2.2" stroke-opacity="0.28"/></g>
</g></g>
<path d="M748.0,397.0C747.8,395.2 746.3,390.2 747.0,386.0C747.7,381.8 749.2,378.3 752.0,372.0C754.8,365.7 758.3,355.7 764.0,348.0C769.7,340.3 777.7,331.8 786.0,326.0C794.3,320.2 804.7,315.7 814.0,313.0C823.3,310.3 832.7,309.5 842.0,310.0C851.3,310.5 861.0,312.3 870.0,316.0C879.0,319.7 888.7,325.3 896.0,332.0C903.3,338.7 909.3,347.3 914.0,356.0C918.7,364.7 922.0,375.3 924.0,384.0C926.0,392.7 926.5,400.0 926.0,408.0C925.5,416.0 923.3,424.0 921.0,432.0C918.7,440.0 914.8,447.3 912.0,456.0C909.2,464.7 905.8,475.0 904.0,484.0C902.2,493.0 900.7,500.7 901.0,510.0C901.3,519.3 903.2,530.7 906.0,540.0C908.8,549.3 913.3,557.3 918.0,566.0C922.7,574.7 927.8,584.3 934.0,592.0C940.2,599.7 951.5,608.7 955.0,612.0C952.5,613.0 945.2,616.7 940.0,618.0C934.8,619.3 930.7,620.0 924.0,620.0C917.3,620.0 908.0,620.0 900.0,618.0C892.0,616.0 883.7,612.3 876.0,608.0C868.3,603.7 861.0,599.0 854.0,592.0C847.0,585.0 839.7,574.7 834.0,566.0C828.3,557.3 823.7,549.3 820.0,540.0C816.3,530.7 813.7,519.3 812.0,510.0C810.3,500.7 809.7,492.3 810.0,484.0C810.3,475.7 812.0,467.0 814.0,460.0C816.0,453.0 820.0,448.0 822.0,442.0C824.0,436.0 826.5,429.5 826.0,424.0C825.5,418.5 822.3,412.8 819.0,409.0C815.7,405.2 810.8,402.8 806.0,401.0C801.2,399.2 795.7,397.8 790.0,398.0C784.3,398.2 777.3,400.8 772.0,402.0C766.7,403.2 762.0,405.8 758.0,405.0C754.0,404.2 749.7,398.3 748.0,397.0Z" fill="#73c99e" opacity="0.29"/>
<path d="M748.0,397.0C748.3,394.8 748.0,389.2 750.0,384.0C752.0,378.8 755.3,372.0 760.0,366.0C764.7,360.0 771.3,353.0 778.0,348.0C784.7,343.0 791.3,339.2 800.0,336.0C808.7,332.8 820.7,329.8 830.0,329.0C839.3,328.2 848.0,328.7 856.0,331.0C864.0,333.3 871.8,337.7 878.0,343.0C884.2,348.3 889.2,355.5 893.0,363.0C896.8,370.5 899.5,380.2 901.0,388.0C902.5,395.8 902.7,402.3 902.0,410.0C901.3,417.7 899.0,426.0 897.0,434.0C895.0,442.0 891.8,449.7 890.0,458.0C888.2,466.3 886.5,475.7 886.0,484.0C885.5,492.3 885.7,499.3 887.0,508.0C888.3,516.7 890.8,527.0 894.0,536.0C897.2,545.0 901.3,553.3 906.0,562.0C910.7,570.7 913.8,579.7 922.0,588.0C930.2,596.3 949.5,608.0 955.0,612.0C952.5,613.0 945.2,616.7 940.0,618.0C934.8,619.3 930.7,620.0 924.0,620.0C917.3,620.0 908.0,620.0 900.0,618.0C892.0,616.0 883.7,612.3 876.0,608.0C868.3,603.7 861.0,599.0 854.0,592.0C847.0,585.0 839.7,574.7 834.0,566.0C828.3,557.3 823.7,549.3 820.0,540.0C816.3,530.7 813.7,519.3 812.0,510.0C810.3,500.7 809.7,492.3 810.0,484.0C810.3,475.7 812.0,467.0 814.0,460.0C816.0,453.0 820.0,448.0 822.0,442.0C824.0,436.0 826.5,429.5 826.0,424.0C825.5,418.5 822.3,412.8 819.0,409.0C815.7,405.2 810.8,402.8 806.0,401.0C801.2,399.2 795.7,397.8 790.0,398.0C784.3,398.2 777.3,400.8 772.0,402.0C766.7,403.2 762.0,405.8 758.0,405.0C754.0,404.2 749.7,398.3 748.0,397.0Z" fill="#73c99e" opacity="0.05"/>
<path d="M966.0,292.0C967.5,294.0 972.0,299.3 975.0,304.0C978.0,308.7 981.3,315.0 984.0,320.0C986.7,325.0 989.8,331.7 991.0,334.0C993.2,334.2 999.2,334.0 1004.0,335.0C1008.8,336.0 1014.0,337.5 1020.0,340.0C1026.0,342.5 1033.3,346.3 1040.0,350.0C1046.7,353.7 1054.7,358.3 1060.0,362.0C1065.3,365.7 1068.8,369.2 1072.0,372.0C1075.2,374.8 1077.8,377.8 1079.0,379.0C1077.2,381.2 1072.5,387.8 1068.0,392.0C1063.5,396.2 1057.3,400.7 1052.0,404.0C1046.7,407.3 1040.0,409.8 1036.0,412.0C1032.0,414.2 1029.3,416.2 1028.0,417.0C1030.7,419.5 1039.0,427.2 1044.0,432.0C1049.0,436.8 1053.7,441.3 1058.0,446.0C1062.3,450.7 1066.7,455.0 1070.0,460.0C1073.3,465.0 1075.8,470.7 1078.0,476.0C1080.2,481.3 1082.2,489.3 1083.0,492.0C1080.5,490.8 1073.5,486.9 1068.0,485.0C1062.5,483.1 1056.1,481.5 1050.0,480.5C1043.9,479.5 1034.6,479.2 1031.5,479.0C1032.2,480.8 1034.8,485.5 1036.0,490.0C1037.2,494.5 1038.3,499.3 1039.0,506.0C1039.7,512.7 1040.5,522.0 1040.0,530.0C1039.5,538.0 1038.3,546.0 1036.0,554.0C1033.7,562.0 1030.3,570.2 1026.0,578.0C1021.7,585.8 1015.0,594.5 1010.0,601.0C1005.0,607.5 999.5,611.8 996.0,617.0C992.5,622.2 990.2,629.5 989.0,632.0C987.7,630.5 984.0,626.8 981.0,623.0C978.0,619.2 974.5,615.2 971.0,609.0C967.5,602.8 963.2,593.8 960.0,586.0C956.8,578.2 954.2,569.7 952.0,562.0C949.8,554.3 948.3,548.0 947.0,540.0C945.7,532.0 944.2,523.0 944.0,514.0C943.8,505.0 944.8,495.0 946.0,486.0C947.2,477.0 948.8,468.7 951.0,460.0C953.2,451.3 956.3,441.0 959.0,434.0C961.7,427.0 965.7,420.7 967.0,418.0C965.7,416.0 961.7,411.0 959.0,406.0C956.3,401.0 953.2,394.3 951.0,388.0C948.8,381.7 946.9,375.0 946.0,368.0C945.1,361.0 944.8,353.3 945.5,346.0C946.2,338.7 948.1,330.7 950.0,324.0C951.9,317.3 954.3,311.3 957.0,306.0C959.7,300.7 964.5,294.3 966.0,292.0Z" fill="#73c99e" opacity="0.52"/>
<path d="M1004.5,632.0C1006.2,630.2 1011.2,624.0 1015.0,621.0C1018.8,618.0 1022.7,615.5 1027.5,613.8C1032.3,612.1 1038.6,611.0 1043.8,610.6C1049.0,610.2 1053.6,610.1 1058.8,611.3C1064.0,612.4 1070.5,615.2 1075.0,617.5C1079.5,619.8 1083.1,622.9 1086.0,625.0C1088.9,627.1 1091.4,629.2 1092.5,630.0C1091.0,631.7 1087.4,637.0 1083.8,640.0C1080.2,643.0 1075.8,645.9 1071.0,648.0C1066.2,650.1 1060.2,651.8 1055.0,652.5C1049.8,653.2 1045.0,653.0 1040.0,652.0C1035.0,651.0 1029.6,648.5 1025.0,646.3C1020.4,644.1 1015.9,641.2 1012.5,638.8C1009.1,636.4 1005.8,633.1 1004.5,632.0Z" fill="#73c99e" opacity="0.50"/>
</svg>
<div class="abs" id="artborder" style="left:306px;top:200px;width:961px;height:561px;border:1px solid #000;box-shadow:1px 1px 0 rgba(0,0,0,.12)"></div>

<div id="tabbar" class="abs"></div>
<div class="abs" style="left:74px;top:66px;width:206px;height:19px;background:#3d3d3d;box-shadow:inset 0 1px 0 #474747"></div>
<span class="t" style="left:83.0px;top:70.5px;font-size:11.2px;letter-spacing:-0.06px;color:#9c9c9c;font-weight:bold;">utopy.ai* @ 100% (RGB/Preview)</span>
<svg class="abs" style="left:266px;top:72px" width="8" height="8" viewBox="0 0 8 8"><path d="M1.2,1.2L6.8,6.8M6.8,1.2L1.2,6.8" stroke="#d0d0d0" stroke-width="1.5"/></svg>
<div class="abs" style="left:281px;top:66px;width:215px;height:19px;background:#3d3d3d;box-shadow:inset 0 1px 0 #474747"></div>
<span class="t" style="left:290.0px;top:70.5px;font-size:11.2px;letter-spacing:-0.07px;color:#9c9c9c;font-weight:bold;">Untitled-1* @ 128% (RGB/Preview)</span>
<svg class="abs" style="left:482px;top:72px" width="8" height="8" viewBox="0 0 8 8"><path d="M1.2,1.2L6.8,6.8M6.8,1.2L1.2,6.8" stroke="#d0d0d0" stroke-width="1.5"/></svg>
<div class="abs" style="left:497px;top:66px;width:215px;height:19px;background:#3d3d3d;box-shadow:inset 0 1px 0 #474747"></div>
<span class="t" style="left:506.0px;top:70.5px;font-size:11.2px;letter-spacing:-0.07px;color:#9c9c9c;font-weight:bold;">Untitled-2* @ 200% (RGB/Preview)</span>
<svg class="abs" style="left:698px;top:72px" width="8" height="8" viewBox="0 0 8 8"><path d="M1.2,1.2L6.8,6.8M6.8,1.2L1.2,6.8" stroke="#d0d0d0" stroke-width="1.5"/></svg>
<div class="abs" style="left:713px;top:66px;width:216px;height:19px;background:#4b4b4b;box-shadow:inset 0 1px 0 #5c5c5c"></div>
<span class="t" style="left:722.5px;top:70.5px;font-size:11.2px;letter-spacing:-0.08px;color:#ececec;font-weight:bold;">Untitled-3* @ 100% (RGB/Preview)</span>
<svg class="abs" style="left:914px;top:72px" width="8" height="8" viewBox="0 0 8 8"><path d="M1.2,1.2L6.8,6.8M6.8,1.2L1.2,6.8" stroke="#e8e8e8" stroke-width="1.5"/></svg>
<div class="abs" style="left:74px;top:85px;width:1485px;height:1px;background:#262626"></div>
<div id="toolbar" class="abs"></div>
<div id="tbgap" class="abs"></div>
<div id="tbhead" class="abs"></div>
<div class="abs" style="left:0;top:66px;width:1px;height:794px;background:#2c2c2c"></div>
<svg class="abs" style="left:0;top:66px" width="72" height="540" viewBox="0 66 72 540">
<defs>
<linearGradient id="ig" x1="0" y1="0" x2="0" y2="1"><stop offset="0" stop-color="#ececec"/><stop offset="1" stop-color="#a6a6a6"/></linearGradient>
<linearGradient id="ig2" x1="0" y1="0" x2="0" y2="1"><stop offset="0" stop-color="#5c5c5c"/><stop offset="1" stop-color="#8e8e8e"/></linearGradient>
<linearGradient id="gh" x1="0" y1="0" x2="1" y2="0"><stop offset="0" stop-color="#3c3c3c"/><stop offset="1" stop-color="#e4e4e4"/></linearGradient>
</defs>
<path d="M8.2,69.2v5l-3.2,-2.5zM12.2,69.2v5l-3.2,-2.5z" fill="#d0d0d0"/>
<rect x="26" y="82" width="1" height="3.5" fill="#1c1c1c"/>
<rect x="28" y="82" width="1" height="3.5" fill="#1c1c1c"/>
<rect x="30" y="82" width="1" height="3.5" fill="#1c1c1c"/>
<rect x="32" y="82" width="1" height="3.5" fill="#1c1c1c"/>
<rect x="34" y="82" width="1" height="3.5" fill="#1c1c1c"/>
<rect x="36" y="82" width="1" height="3.5" fill="#1c1c1c"/>
<rect x="38" y="82" width="1" height="3.5" fill="#1c1c1c"/>
<rect x="40" y="82" width="1" height="3.5" fill="#1c1c1c"/>
<rect x="42" y="82" width="1" height="3.5" fill="#1c1c1c"/>
<rect x="44" y="82" width="1" height="3.5" fill="#1c1c1c"/>
<rect x="6" y="142.5" width="60" height="1" fill="#3a3a3a"/><rect x="6" y="143.5" width="60" height="1" fill="#525252"/>
<rect x="6" y="240.0" width="60" height="1" fill="#3a3a3a"/><rect x="6" y="241.0" width="60" height="1" fill="#525252"/>
<rect x="6" y="314.0" width="60" height="1" fill="#3a3a3a"/><rect x="6" y="315.0" width="60" height="1" fill="#525252"/>
<rect x="6" y="364.5" width="60" height="1" fill="#3a3a3a"/><rect x="6" y="365.5" width="60" height="1" fill="#525252"/>
<rect x="6" y="390.8" width="60" height="1" fill="#3a3a3a"/><rect x="6" y="391.8" width="60" height="1" fill="#525252"/>
<rect x="6" y="440.3" width="60" height="1" fill="#3a3a3a"/><rect x="6" y="441.3" width="60" height="1" fill="#525252"/>
<rect x="7.5" y="95.5" width="27" height="21.5" fill="#323232" stroke="#2a2a2a"/>
<path d="M16.3,97.6V112.2L19.6,109.2L22,114.6L24.4,113.5L22.1,108.2L26.8,107.9Z" fill="#1f1f1f" stroke="#ededed" stroke-width="1.2" stroke-linejoin="miter"/>
<path d="M46.8,97.8V112L50,109L52.4,114.3L54.6,113.3L52.3,108L56.6,107.6Z" fill="url(#ig)"/>
<path d="M64,113.0V116.2H60.8Z" fill="#dcdcdc"/>
<polygon points="18.5,120.5 19.8,124.1 23.3,122.5 21.7,126.0 25.3,127.3 21.7,128.6 23.3,132.1 19.8,130.5 18.5,134.1 17.2,130.5 13.7,132.1 15.3,128.6 11.7,127.3 15.3,126.0 13.7,122.5 17.2,124.1" fill="url(#ig)"/>
<path d="M21.5,130.3L28.6,137.4" stroke="#c8c8c8" stroke-width="2.2" stroke-linecap="round"/>
<ellipse cx="51" cy="127.6" rx="7.8" ry="4.8" fill="none" stroke="#cbcbcb" stroke-width="1.6"/>
<path d="M44.2,130.5c-1.5,1.5 0.5,3.4 2.2,2.2c1.3,-1 -0.5,-2.6 -1.4,-1c-0.8,1.6 1.2,3.6 1,5.2" fill="none" stroke="#cbcbcb" stroke-width="1.3"/>
<path d="M51.6,124.2V138.8L59.8,133.4Z" fill="url(#ig)" stroke="#484848" stroke-width="0.5"/>
<path d="M13,164.2L16.2,153.6L22.3,149.4L27.6,154.7L23.6,160.8Z" fill="url(#ig)"/>
<path d="M13.3,163.9L19.4,157.3" stroke="#555" stroke-width="0.9"/><circle cx="20.2" cy="156.6" r="1.5" fill="#333"/>
<path d="M23.3,148.4L26,145.8L30.5,150.3L27.8,153Z" fill="#dadada"/>
<path d="M34,162.8V166H30.8Z" fill="#dcdcdc"/>
<text x="44.2" y="161.8" font-family="Liberation Serif,serif" font-size="19.5" fill="url(#ig)">T</text>
<path d="M64,162.8V166H60.8Z" fill="#dcdcdc"/>
<path d="M14,186.8L26.8,172.9" stroke="#cbcbcb" stroke-width="1.4"/>
<path d="M34,186.8V190H30.8Z" fill="#dcdcdc"/>
<ellipse cx="50.9" cy="179.8" rx="7.9" ry="5.8" fill="url(#ig2)" stroke="#dedede" stroke-width="1.2"/>
<path d="M64,186.8V190H60.8Z" fill="#dcdcdc"/>
<path d="M29.6,196.6L21,205.8" stroke="#cdcdcd" stroke-width="2.2" stroke-linecap="round"/>
<path d="M20.6,204.6C18.2,204.2 15.6,206.4 14.6,208.6C13.8,210.2 12.8,210.4 12,209.9C14,212.6 19.4,212.2 21.4,209.4C22.4,207.8 21.8,205.8 20.6,204.6Z" fill="url(#ig)"/>
<path d="M42.8,212.2L47.7,210.7L44.3,207.3Z" fill="#e2e2e2"/>
<path d="M47.7,210.7L57,201.4L53.6,198L44.3,207.3Z" fill="#8c8c8c"/><path d="M46.6,209.6L55.9,200.3" stroke="#b0b0b0" stroke-width="1.2"/>
<path d="M57,201.4L58.9,199.5a2.4,2.4 0 0 0 -3.4,-3.4L53.6,198Z" fill="#e4e4e4"/>
<path d="M64,210.8V214H60.8Z" fill="#dcdcdc"/>
<path d="M13,225.5H20l2,-1.5h6.5V231L25.5,234.8H13Z" fill="url(#ig)"/>
<path d="M17.5,230.2c1.5,-2.8 5.5,-4.8 8.5,-4.4c-0.5,2.6 -4,5.4 -8.5,4.4z" fill="#3a3a3a"/>
<path d="M25.4,225.6L30.4,220.4" stroke="#d8d8d8" stroke-width="1.8" stroke-linecap="round"/>
<path d="M43.9,227.8L49.6,221.1H60L54.4,227.8Z" fill="#c9c9c9"/><path d="M43.9,227.8H54.4L52.6,234.2H43.3Z" fill="#9e9e9e"/><path d="M54.4,227.8L60,221.1L59.4,226.6L52.6,234.2Z" fill="#7e7e7e"/>
<path d="M64,234.8V238H60.8Z" fill="#dcdcdc"/>
<circle cx="21.1" cy="253.8" r="6.8" fill="none" stroke="#cbcbcb" stroke-width="1.6" stroke-dasharray="2.2 1.6"/>
<path d="M15.2,250.2A6.8,6.8 0 0 1 27.8,252.6" fill="none" stroke="#cbcbcb" stroke-width="1.7"/>
<path d="M13.4,250.6l5.2,-3.8l0.2,5z" fill="#cbcbcb"/>
<path d="M34,260.3V263.5H30.8Z" fill="#dcdcdc"/>
<rect x="46.3" y="247.2" width="12.4" height="10.8" fill="#5a5a5a" stroke="#cbcbcb" stroke-width="0.95"/>
<rect x="42.3" y="253.8" width="8.2" height="6.8" fill="none" stroke="#cbcbcb" stroke-width="0.95"/>
<path d="M51.5,254.2L56.4,249.4M53,249.2h3.6v3.6" fill="none" stroke="#e6e6e6" stroke-width="0.95"/>
<path d="M64,260.3V263.5H60.8Z" fill="#dcdcdc"/>
<path d="M14,272.4c2.4,-2.6 4.6,-1.6 4.6,1.6c0,3.4 -0.8,6 1.6,7.4c3,1.6 5,-5.6 8.4,-5c2.2,0.4 2.2,3.8 1.2,6c0.2,-2 -0.6,-3.6 -2,-3c-2.6,1.2 -3.6,6 -7.8,5.6c-4.6,-0.6 -4.2,-5.6 -3.8,-8.6c0.2,-1.8 -0.4,-3.2 -2.2,-4z" fill="url(#ig)"/>
<path d="M13.4,283.4L23.4,273.6" stroke="#e0e0e0" stroke-width="0.9"/><circle cx="13.4" cy="283.4" r="1.4" fill="#444" stroke="#eee" stroke-width="0.8"/><circle cx="18" cy="279" r="1.9" fill="#444" stroke="#eee" stroke-width="1"/><circle cx="23.4" cy="273.6" r="1.4" fill="#444" stroke="#eee" stroke-width="0.8"/>
<path d="M34,284.3V287.5H30.8Z" fill="#dcdcdc"/>
<rect x="47.8" y="273" width="10.6" height="10" fill="#555" stroke="#cbcbcb" stroke-width="0.95" stroke-dasharray="2 1.4"/>
<rect x="46.8" y="272" width="2" height="2" fill="#e6e6e6"/>
<rect x="52.1" y="272" width="2" height="2" fill="#e6e6e6"/>
<rect x="57.4" y="272" width="2" height="2" fill="#e6e6e6"/>
<rect x="57.4" y="277" width="2" height="2" fill="#e6e6e6"/>
<rect x="57.4" y="282" width="2" height="2" fill="#e6e6e6"/>
<rect x="52.1" y="282" width="2" height="2" fill="#e6e6e6"/>
<rect x="46.8" y="282" width="2" height="2" fill="#e6e6e6"/>
<path d="M43,270.8V282.2L50.8,277.2Z" fill="url(#ig)" stroke="#484848" stroke-width="0.4"/>
<circle cx="17.4" cy="300.6" r="5" fill="#6a6a6a" stroke="#c4c4c4" stroke-width="0.95"/><circle cx="22.6" cy="299.8" r="5.6" fill="#666" fill-opacity="0.7" stroke="#b4b4b4" stroke-width="0.95"/>
<path d="M13.6,300.6H24" stroke="#fff" stroke-width="1.2" stroke-dasharray="1.2 1"/>
<path d="M24.2,299.6V310L30.6,305Z" fill="url(#ig)" stroke="#484848" stroke-width="0.4"/>
<path d="M34,308.3V311.5H30.8Z" fill="#dcdcdc"/>
<path d="M43,293.8L48,296.2V308.6H43Z" fill="#c4c4c4"/><path d="M48.8,296.6L52.6,298.4V308.6H48.8Z" fill="#b2b2b2"/><path d="M53.4,298.8L55.6,299.8V305.2H59.2V308.6H53.4Z" fill="#9e9e9e"/>
<path d="M43,300.6H52.6M43,304.8H55.6M43,309.4H59.6" stroke="#4a4a4a" stroke-width="0.9"/><path d="M43,309.6H59.6" stroke="#d8d8d8" stroke-width="1"/>
<path d="M64,308.3V311.5H60.8Z" fill="#dcdcdc"/>
<rect x="13.3" y="322.3" width="15.6" height="11.2" fill="#555" stroke="#cbcbcb" stroke-width="0.95"/>
<path d="M13.5,327c4,-2 6,1 8,0.6s4,-3 7.4,-2.4M13.5,330.8c3,-1.4 5,0.6 7.4,0.4s4.6,-2.4 8,-1.6M17.6,322.4c1.6,3 0.6,7 2.6,11M23.4,322.4c2,3.4 1.2,7.6 3.4,11" fill="none" stroke="#cbcbcb" stroke-width="1"/>
<rect x="43.4" y="322.3" width="15.4" height="11.2" fill="url(#gh)" stroke="#cbcbcb" stroke-width="0.95"/>
<path d="M14,358.6l1,-3.2l8.4,-8.4l2.4,2.4l-8.4,8.4z" fill="#5a5a5a" stroke="#d6d6d6" stroke-width="0.95"/>
<path d="M22.4,346.8l4.4,4.4M23.6,348l2.6,-2.6a2,2 0 0 1 2.9,2.9l-2.6,2.6" fill="#dcdcdc" stroke="#dcdcdc" stroke-width="1.6" stroke-linecap="round"/>
<path d="M32.6,358.3V361.5H29.400000000000002Z" fill="#dcdcdc"/>
<rect x="41.8" y="343.8" width="9.2" height="8.4" fill="#c6c6c6"/><rect x="46" y="346.8" width="8.8" height="8.6" rx="2" fill="#777" stroke="#cfcfcf" stroke-width="0.95"/><circle cx="55.4" cy="354.4" r="4.2" fill="#5e5e5e" stroke="#d8d8d8" stroke-width="0.95"/>
<rect x="19.4" y="374.4" width="9.4" height="11.2" rx="1" fill="#5c5c5c" stroke="#cbcbcb" stroke-width="0.95"/><rect x="22.4" y="370.2" width="3.4" height="3" fill="#cbcbcb"/><circle cx="24.1" cy="380.4" r="2.7" fill="#555" stroke="#e2e2e2" stroke-width="1.3"/><circle cx="24.1" cy="380.4" r="0.8" fill="#eee"/>
<circle cx="12.4" cy="371.2" r="0.55" fill="#ddd"/>
<circle cx="14.6" cy="370.4" r="0.55" fill="#ddd"/>
<circle cx="16.8" cy="371" r="0.55" fill="#ddd"/>
<circle cx="19" cy="370.4" r="0.55" fill="#ddd"/>
<circle cx="13.4" cy="373" r="0.55" fill="#ddd"/>
<circle cx="15.8" cy="372.8" r="0.55" fill="#ddd"/>
<circle cx="18" cy="373" r="0.55" fill="#ddd"/>
<circle cx="14.6" cy="374.8" r="0.55" fill="#ddd"/>
<circle cx="17" cy="374.6" r="0.55" fill="#ddd"/>
<path d="M34,384.3V387.5H30.8Z" fill="#dcdcdc"/>
<path d="M43.4,370.6V384.4H59.4" fill="none" stroke="#cbcbcb" stroke-width="0.95"/><rect x="45.8" y="377.6" width="3" height="6.4" fill="#5c5c5c" stroke="#cbcbcb" stroke-width="0.9"/><rect x="51" y="372.8" width="3" height="11.2" fill="#7e7e7e" stroke="#8e8e8e" stroke-width="0.9"/><rect x="56" y="375.2" width="2.8" height="8.8" fill="#5c5c5c" stroke="#cbcbcb" stroke-width="0.9"/>
<path d="M64,384.3V387.5H60.8Z" fill="#dcdcdc"/>
<rect x="15.8" y="399.4" width="10.8" height="9" fill="url(#ig2)" stroke="#cbcbcb" stroke-width="0.95"/>
<path d="M15.6,394.8v3M26.8,394.8v3M15.6,410v3M26.8,410v3M11,399.4h3.2M11,408.4h3.2M28.2,399.4h3.2M28.2,408.4h3.2" stroke="#cbcbcb" stroke-width="0.95"/>
<path d="M42.8,410.8L52,402.4L55,405.4Z" fill="url(#ig)"/><path d="M52.6,401.8L56,397.4H61L55.6,404.8Z" fill="#9a9a9a"/>
<path d="M64,410.3V413.5H60.8Z" fill="#dcdcdc"/>
<path d="M15.4,436.4c-0.6,-2 -2.4,-4.4 -3.4,-6c-0.6,-1.2 0.6,-2 1.6,-1.2l2.2,2.2v-7.2c0,-1.4 1.9,-1.4 2,0l0.3,4.4v-6.4c0,-1.5 2.1,-1.5 2.1,0v6.2l0.5,-5.4c0.2,-1.4 2.1,-1.3 2,0.2l-0.3,6l1.2,-3.6c0.5,-1.3 2.2,-0.8 1.9,0.6c-0.7,3 -1.2,5.4 -1.6,7.4c-0.3,1.4 -0.8,2 -1.2,2.8z" fill="url(#ig)"/>
<path d="M34,434.3V437.5H30.8Z" fill="#dcdcdc"/>
<circle cx="49.6" cy="425.4" r="5.1" fill="#666" stroke="#c8c8c8" stroke-width="1.5"/><path d="M53.4,429.4L58.8,434.8" stroke="#c8c8c8" stroke-width="2.4" stroke-linecap="round"/>
<rect x="25.5" y="463.5" width="34" height="34" fill="#fff" stroke="#2a2a2a"/><rect x="35.5" y="473.5" width="14" height="14" fill="#484848" stroke="#2a2a2a"/><path d="M26.4,496.6L58.6,464.4" stroke="#f00808" stroke-width="2"/>
<rect x="7" y="445" width="35" height="34" fill="#73c99e" stroke="#f2f2f2" stroke-width="1.4"/><rect x="6" y="444" width="37" height="36" fill="none" stroke="#2a2a2a" stroke-width="0.8"/>
<path d="M52,447.6h4.4a1.6,1.6 0 0 1 1.6,1.6v3.4" fill="none" stroke="#d8d8d8" stroke-width="0.95"/><path d="M52.6,445.4v4.4l-2.8,-2.2z" fill="#d8d8d8"/><path d="M55.8,452h4.4l-2.2,2.8z" fill="#d8d8d8"/>
<rect x="10.5" y="490.5" width="6.4" height="6.4" fill="#222" stroke="#e0e0e0"/><rect x="7.5" y="487.5" width="6.4" height="6.4" fill="#f2f2f2" stroke="#333"/>
<rect x="7.5" y="506.5" width="60" height="17" fill="#3c3c3c" stroke="#2b2b2b"/>
<rect x="8" y="507" width="19.5" height="16" fill="#2c2c2c"/><path d="M27.5,507v16M47.5,507v16" stroke="#2b2b2b"/>
<rect x="11.5" y="509.5" width="11.6" height="11" fill="#73c99e" stroke="#e8e8e8"/>
<rect x="31.5" y="509.5" width="11.6" height="11" fill="url(#gh)" stroke="#e8e8e8"/>
<rect x="51.5" y="509.5" width="11.6" height="11" fill="#fff" stroke="#e8e8e8"/><path d="M52,520L62.6,510" stroke="#f00808" stroke-width="1.7"/>
<rect x="7.5" y="531.5" width="60" height="15.5" fill="#3e3e3e" stroke="#2b2b2b"/><rect x="8" y="532" width="19.5" height="14.5" fill="#2c2c2c"/><rect x="48" y="532" width="19" height="14.5" fill="#545454"/><path d="M27.5,532v15M47.5,532v15" stroke="#2b2b2b"/>
<circle cx="16" cy="538" r="3.6" fill="#777" stroke="#e0e0e0" stroke-width="0.9"/><rect x="16.2" y="538.4" width="5.6" height="5.2" fill="#cfcfcf"/>
<circle cx="36" cy="538" r="3.8" fill="#888" stroke="#d0d0d0" stroke-width="0.9"/><circle cx="38.4" cy="540" r="3.8" fill="none" stroke="#c6c6c6" stroke-width="0.9"/>
<circle cx="57" cy="539" r="3.6" fill="none" stroke="#777" stroke-width="0.9"/><path d="M57,536.4a2.6,2.6 0 0 1 0,5.2z" fill="#777"/>
<rect x="29.5" y="556.5" width="15" height="10" fill="#6a6a6a" stroke="#dcdcdc" stroke-width="0.95"/><rect x="24" y="561" width="14.6" height="10.2" fill="#4a4a4a" stroke="#dcdcdc" stroke-width="0.95"/><rect x="24.6" y="561.6" width="13.4" height="2" fill="#cfcfcf"/>
</svg>
<div class="abs" style="left:98px;top:197px;width:36px;height:153px;background:#444;border:1px solid #2a2a2a;border-radius:4px 4px 0 0;box-shadow:0 0 4px rgba(0,0,0,.45);"></div>
<div class="abs" style="left:99px;top:198px;width:34px;height:13px;background:linear-gradient(#3b3b3b,#313131);border-radius:3px 3px 0 0;border-bottom:1px solid #262626"></div>
<div class="abs" style="left:99px;top:211px;width:34px;height:1px;background:#5a5a5a"></div>
<svg class="abs" style="left:98px;top:197px" width="50" height="14" viewBox="0 0 50 14"><path d="M-20,4.3v5.6l3.4,-2.8zM-16,4.3v5.6l3.4,-2.8z" fill="#dcdcdc"/><path d="M22.4,4.6l5.6,5.2M28.0,4.6l-5.6,5.2" stroke="#e4e4e4" stroke-width="1.7"/></svg>
<div class="abs" style="left:87px;top:197px;width:36px;height:177px;background:#484848;border:1px solid #2a2a2a;border-radius:4px 4px 0 0;box-shadow:0 0 4px rgba(0,0,0,.45);"></div>
<div class="abs" style="left:88px;top:198px;width:34px;height:13px;background:linear-gradient(#3b3b3b,#313131);border-radius:3px 3px 0 0;border-bottom:1px solid #262626"></div>
<div class="abs" style="left:88px;top:211px;width:34px;height:1px;background:#5a5a5a"></div>
<svg class="abs" style="left:87px;top:197px" width="50" height="14" viewBox="0 0 50 14"><path d="M6.8,4.3v5.6l3.4,-2.8zM10.8,4.3v5.6l3.4,-2.8z" fill="#dcdcdc"/><path d="M23.6,4.6l5.6,5.2M29.200000000000003,4.6l-5.6,5.2" stroke="#e4e4e4" stroke-width="1.7"/></svg>
<div class="abs" style="left:95px;top:215px;width:20px;height:3.5px;background:repeating-linear-gradient(90deg,#1a1a1a 0 1px,transparent 1px 2px)"></div>
<div class="abs" style="left:124px;top:215px;width:1px;height:3.5px;background:#1a1a1a"></div>
<svg class="abs" style="left:88px;top:225px" width="34" height="146" viewBox="88 225 34 146">
<defs><linearGradient id="fg" x1="0" y1="0" x2="0" y2="1"><stop offset="0" stop-color="#656565"/><stop offset="1" stop-color="#8c8c8c"/></linearGradient><linearGradient id="fl" x1="0" y1="0" x2="0" y2="1"><stop offset="0" stop-color="#ececec"/><stop offset="1" stop-color="#a8a8a8"/></linearGradient></defs>
<rect x="98.5" y="233" width="13.2" height="11.6" stroke="#d4d4d4" stroke-width="0.95" fill="url(#fg)"/>
<rect x="98.5" y="257.4" width="13.2" height="11.4" rx="3" stroke="#d4d4d4" stroke-width="0.95" fill="url(#fg)"/>
<ellipse cx="104.9" cy="287" rx="7.6" ry="5.7" stroke="#d4d4d4" stroke-width="0.95" fill="url(#fg)"/>
<polygon points="112.2,310.4 108.6,316.2 101.3,316.2 97.6,310.4 101.2,304.6 108.6,304.6" stroke="#d4d4d4" stroke-width="0.95" fill="url(#fg)"/>
<polygon points="104.9,327.8 106.9,332.8 112.3,333.2 108.1,336.7 109.5,341.9 104.9,339.0 100.3,341.9 101.7,336.7 97.5,333.2 102.9,332.8" stroke="#d4d4d4" stroke-width="0.95" fill="url(#fg)"/>
<circle cx="106.4" cy="358.6" r="6.6" fill="#5c5c5c" stroke="#bdbdbd" stroke-width="1"/><circle cx="106.6" cy="358" r="3.9" fill="#cfcfcf"/><circle cx="112.9" cy="352.8" r="1.9" fill="#c4c4c4"/><circle cx="99.2" cy="364.6" r="2.2" fill="#8a8a8a"/>
</svg>
<div class="abs" style="left:89px;top:375px;width:36px;height:128px;background:#484848;border:1px solid #2a2a2a;border-radius:4px 4px 0 0;box-shadow:0 0 4px rgba(0,0,0,.45);"></div>
<div class="abs" style="left:90px;top:376px;width:34px;height:13px;background:linear-gradient(#3b3b3b,#313131);border-radius:3px 3px 0 0;border-bottom:1px solid #262626"></div>
<div class="abs" style="left:90px;top:389px;width:34px;height:1px;background:#5a5a5a"></div>
<svg class="abs" style="left:89px;top:375px" width="50" height="14" viewBox="0 0 50 14"><path d="M6.6,4.3v5.6l3.4,-2.8zM10.6,4.3v5.6l3.4,-2.8z" fill="#dcdcdc"/><path d="M24,4.6l5.6,5.2M29.6,4.6l-5.6,5.2" stroke="#e4e4e4" stroke-width="1.7"/></svg>
<div class="abs" style="left:97px;top:392px;width:20px;height:3.5px;background:repeating-linear-gradient(90deg,#1a1a1a 0 1px,transparent 1px 2px)"></div>
<svg class="abs" style="left:90px;top:400px" width="34" height="100" viewBox="90 400 34 100">
<g transform="translate(86,259.9)"><path d="M13,164.2L16.2,153.6L22.3,149.4L27.6,154.7L23.6,160.8Z" fill="url(#fl)"/><path d="M13.3,163.9L19.4,157.3" stroke="#555" stroke-width="0.9"/><circle cx="20.2" cy="156.6" r="1.4" fill="#333"/><path d="M23.3,148.4L26,145.8L30.5,150.3L27.8,153Z" fill="#dadada"/></g>
<g transform="translate(88.2,283.7)"><path d="M13,164.2L16.2,153.6L22.3,149.4L27.6,154.7L23.6,160.8Z" fill="url(#fl)"/><path d="M13.3,163.9L19.4,157.3" stroke="#555" stroke-width="0.9"/><circle cx="20.2" cy="156.6" r="1.4" fill="#333"/><path d="M23.3,148.4L26,145.8L30.5,150.3L27.8,153Z" fill="#dadada"/></g>
<path d="M96,435.3h8M100,431.3v8" stroke="#dedede" stroke-width="1.9"/>
<g transform="translate(88.2,307.8)"><path d="M13,164.2L16.2,153.6L22.3,149.4L27.6,154.7L23.6,160.8Z" fill="url(#fl)"/><path d="M13.3,163.9L19.4,157.3" stroke="#555" stroke-width="0.9"/><circle cx="20.2" cy="156.6" r="1.4" fill="#333"/><path d="M23.3,148.4L26,145.8L30.5,150.3L27.8,153Z" fill="#dadada"/></g>
<path d="M96,459h8" stroke="#dedede" stroke-width="1.9"/>
<path d="M103.2,494.2V480.6L113,490" fill="none" stroke="#dedede" stroke-width="1.2"/>
</svg>
<div class="abs" style="left:186px;top:302px;width:36px;height:81px;background:#484848;border:1px solid #2a2a2a;border-radius:4px 4px 0 0;box-shadow:0 0 4px rgba(0,0,0,.45);"></div>
<div class="abs" style="left:187px;top:303px;width:34px;height:13px;background:linear-gradient(#3b3b3b,#313131);border-radius:3px 3px 0 0;border-bottom:1px solid #262626"></div>
<div class="abs" style="left:187px;top:316px;width:34px;height:1px;background:#5a5a5a"></div>
<svg class="abs" style="left:186px;top:302px" width="50" height="14" viewBox="0 0 50 14"><path d="M6.8,4.3v5.6l3.4,-2.8zM10.8,4.3v5.6l3.4,-2.8z" fill="#dcdcdc"/><path d="M24,4.6l5.6,5.2M29.6,4.6l-5.6,5.2" stroke="#e4e4e4" stroke-width="1.7"/></svg>
<div class="abs" style="left:194px;top:319.6px;width:20px;height:3.5px;background:repeating-linear-gradient(90deg,#1a1a1a 0 1px,transparent 1px 2px)"></div>
<svg class="abs" style="left:187px;top:328px" width="34" height="54" viewBox="187 328 34 54">
<path d="M200.1,335.6V349.8L203.3,346.8L205.7,352.1L207.9,351.1L205.6,345.8L209.9,345.4Z" fill="url(#fl)"/>
<path d="M197,359.8V374L200.2,371L202.6,376.3L204.8,375.3L202.5,370L206.8,369.6Z" fill="url(#fl)"/>
<path d="M206.4,364.4h8M210.4,360.4v8" stroke="#e0e0e0" stroke-width="1.9"/>
</svg>
<div id="vscroll" class="abs"></div>
<div class="abs" style="left:1544px;top:456px;width:15px;height:15px;background:#9c9c9c"></div>
<svg class="abs" style="left:1547.3px;top:832.0px" width="8" height="5" viewBox="0 0 8 5"><path d="M0,0H8L4.0,5Z" fill="#e0e0e0"/></svg>
<div class="abs" style="left:1543px;top:843px;width:16px;height:17px;background:#4a4a4a;border-left:1px solid #2e2e2e;border-top:1px solid #2e2e2e"></div>
<div class="abs" style="left:1329px;top:76px;width:231px;height:93px;background:#484848;border:1px solid #2b2b2b;box-shadow:0 0 4px rgba(0,0,0,.4)"></div>
<div class="abs" style="left:1330px;top:77px;width:229px;height:19px;background:linear-gradient(#1f1f1f 0 2px,#343434 2px);border-bottom:1px solid #2a2a2a"></div>
<div class="abs" style="left:1330px;top:79px;width:46px;height:18px;background:#484848;border-right:1px solid #2e2e2e;box-shadow:inset 0 1px 0 #5a5a5a"></div>
<svg class="abs" style="left:1334px;top:82px" width="7" height="11" viewBox="0 0 7 11"><path d="M0.8,4L3.5,1L6.2,4M0.8,7L3.5,10L6.2,7" fill="none" stroke="#e0e0e0" stroke-width="1.2"/></svg>
<span class="t" style="left:1343.3px;top:81.9px;font-size:10.8px;letter-spacing:-0.64px;color:#f0f0f0;font-weight:bold;">Color</span>
<div class="abs" style="left:1377px;top:80px;width:27px;height:16px;background:#363636;border-right:1px solid #262626;box-shadow:inset 1px 0 0 #404040;overflow:hidden"></div>
<span class="t" style="left:1382.7px;top:81.9px;font-size:10.8px;letter-spacing:-0.60px;color:#a6a6a6;font-weight:bold;">Colo</span>
<div class="abs" style="left:1405px;top:80px;width:29px;height:16px;background:#363636;border-right:1px solid #262626;box-shadow:inset 1px 0 0 #404040;overflow:hidden"></div>
<span class="t" style="left:1411.7px;top:81.9px;font-size:10.8px;letter-spacing:-0.73px;color:#a6a6a6;font-weight:bold;">Swat</span>
<div class="abs" style="left:1435px;top:80px;width:29px;height:16px;background:#363636;border-right:1px solid #262626;box-shadow:inset 1px 0 0 #404040;overflow:hidden"></div>
<span class="t" style="left:1441.0px;top:81.9px;font-size:10.8px;letter-spacing:-1.06px;color:#a6a6a6;font-weight:bold;">Brusl</span>
<div class="abs" style="left:1465px;top:80px;width:32px;height:16px;background:#363636;border-right:1px solid #262626;box-shadow:inset 1px 0 0 #404040;overflow:hidden"></div>
<span class="t" style="left:1470.0px;top:81.9px;font-size:10.8px;letter-spacing:-1.10px;color:#a6a6a6;font-weight:bold;">Symb</span>
<svg class="abs" style="left:1518px;top:80px" width="42" height="14" viewBox="1518 80 42 14"><path d="M1520.2,84v6.4l4,-3.2zM1525,84v6.4l4,-3.2z" fill="#e4e4e4"/><path d="M1535.5,81v12M1537.5,81v12" stroke="#5c5c5c" stroke-width="1"/><path d="M1541.6,85.4h5l-2.5,3z" fill="#dcdcdc"/><path d="M1548,84h8M1548,87.2h8M1548,90.4h8" stroke="#dcdcdc" stroke-width="1.4"/></svg>
<div class="abs" style="left:1336px;top:106px;width:38px;height:13px;background:#fff;outline:1px solid #2e2e2e"></div>
<div class="abs" style="left:1348.5px;top:106px;width:13px;height:13px;background:#000"></div>
<svg class="abs" style="left:1336px;top:106px" width="13" height="13" viewBox="0 0 13 13"><path d="M0.8,12.2L12,0.8" stroke="#f00808" stroke-width="1.8"/></svg>
<span class="t" style="left:1479.0px;top:107.6px;font-size:10.5px;letter-spacing:-0.34px;color:#dcdcdc;">#</span>
<div class="abs" style="left:1490px;top:104px;width:53px;height:17.5px;background:#a8a8a8;border:1px solid #2e2e2e"></div>
<span class="t" style="left:1496.0px;top:107.9px;font-size:10.5px;letter-spacing:-0.91px;color:#161616;">73c99e</span>
<div class="abs" style="left:1336px;top:129.5px;width:207px;height:24px;border:1px solid #2a2a2a;background:linear-gradient(to bottom,rgba(255,255,255,.95) 0,rgba(255,255,255,0) 42%,rgba(0,0,0,0) 48%,rgba(0,0,0,1) 97%),linear-gradient(to right,#f00 0,#ff0 17%,#0f0 34%,#0ff 50%,#00f 67%,#f0f 84%,#f00 100%)"></div>
<svg class="abs" style="left:1547px;top:148px" width="12" height="12" viewBox="0 0 12 12"><g fill="#6e6e6e"><rect x="9" y="1" width="1" height="1"/><rect x="7" y="3" width="1" height="1"/><rect x="9" y="3" width="1" height="1"/><rect x="5" y="5" width="1" height="1"/><rect x="7" y="5" width="1" height="1"/><rect x="9" y="5" width="1" height="1"/><rect x="3" y="7" width="1" height="1"/><rect x="5" y="7" width="1" height="1"/><rect x="7" y="7" width="1" height="1"/><rect x="9" y="7" width="1" height="1"/><rect x="1" y="9" width="1" height="1"/><rect x="3" y="9" width="1" height="1"/><rect x="5" y="9" width="1" height="1"/><rect x="7" y="9" width="1" height="1"/><rect x="9" y="9" width="1" height="1"/></g></svg>
<div class="abs" style="left:1330px;top:160px;width:229px;height:8px;background:#454545;border-top:1px solid #333"></div>
<div class="abs" style="left:1435px;top:163px;width:20px;height:3px;background:repeating-linear-gradient(90deg,#1a1a1a 0 1px,transparent 1px 2px)"></div>
<div id="statusbar" class="abs"></div>
<div class="abs" style="left:78.5px;top:845px;width:42px;height:15px;background:#a9a9a9;border:1px solid #2e2e2e;border-bottom:none"></div>
<span class="t" style="left:82.5px;top:847.9px;font-size:10.8px;letter-spacing:-1.03px;color:#141414;">100%</span>
<div class="abs" style="left:120.5px;top:845px;width:15px;height:15px;background:linear-gradient(#5c5c5c,#4e4e4e);border:1px solid #2e2e2e;border-bottom:none"></div>
<svg class="abs" style="left:124.5px;top:850.8px" width="7" height="4.5" viewBox="0 0 7 4.5"><path d="M0,0H7L3.5,4.5Z" fill="#e2e2e2"/></svg>
<svg class="abs" style="left:140px;top:846px" width="135" height="12" viewBox="140 846 135 12"><path d="M144,848.4h1.6v7h-1.6zM151.6,848.4v7l-5,-3.5z" fill="#7a7a7a"/><path d="M168.6,848.4v7l-5,-3.5z" fill="#7a7a7a"/><path d="M246.2,848.4v7l5,-3.5z" fill="#7a7a7a"/><path d="M261.6,848.4v7l5,-3.5zM267,848.4h1.6v7h-1.6z" fill="#7a7a7a"/></svg>
<div class="abs" style="left:178.5px;top:845px;width:42px;height:15px;background:#a9a9a9;border:1px solid #2e2e2e;border-bottom:none"></div>
<span class="t" style="left:182.6px;top:847.9px;font-size:10.8px;letter-spacing:-2.41px;color:#141414;">1</span>
<div class="abs" style="left:220.5px;top:845px;width:15px;height:15px;background:linear-gradient(#5c5c5c,#4e4e4e);border:1px solid #2e2e2e;border-bottom:none"></div>
<svg class="abs" style="left:224.5px;top:850.8px" width="7" height="4.5" viewBox="0 0 7 4.5"><path d="M0,0H7L3.5,4.5Z" fill="#e2e2e2"/></svg>
<div class="abs" style="left:277.5px;top:845px;width:219px;height:15px;background:#484848;border:1px solid #2e2e2e;border-bottom:none"></div><div class="abs" style="left:477.5px;top:845px;width:19px;height:15px;background:#4c4c4c;border:1px solid #2e2e2e;border-bottom:none"></div>
<span class="t" style="left:358.0px;top:848.0px;font-size:10.6px;letter-spacing:-0.62px;color:#dcdcdc;">Selection</span>
<svg class="abs" style="left:483.5px;top:847.5px" width="8" height="10" viewBox="0 0 8 10"><path d="M1.2,0.8v8.4l5.4,-4.2z" fill="#e0e0e0"/></svg>
<div class="abs" style="left:497px;top:844px;width:1046px;height:16px;background:#363636"></div>
<svg class="abs" style="left:501px;top:846px" width="9" height="12" viewBox="0 0 9 12"><path d="M7.6,1.4v9l-6,-4.5z" fill="#e2e2e2"/></svg>
<svg class="abs" style="left:1530px;top:846px" width="9" height="12" viewBox="0 0 9 12"><path d="M1.4,1.4v9l6,-4.5z" fill="#e2e2e2"/></svg>
<div class="abs" style="left:1013px;top:845px;width:16px;height:14px;background:#9c9c9c"></div>
<div id="dockgap" class="abs"></div>
<div id="dock" class="abs"></div>
<div class="abs" style="left:1562px;top:66px;width:37px;height:12px;background:linear-gradient(#3b3b3b,#323232);border:1px solid #282828;border-top:none"></div><div class="abs" style="left:1562px;top:78px;width:38px;height:1px;background:#585858"></div>
<svg class="abs" style="left:1562px;top:66px" width="38" height="500" viewBox="1562 66 38 500">
<defs><linearGradient id="dg" x1="0" y1="0" x2="0" y2="1"><stop offset="0" stop-color="#e6e6e6"/><stop offset="1" stop-color="#9c9c9c"/></linearGradient><linearGradient id="dgh" x1="0" y1="0" x2="1" y2="0"><stop offset="0" stop-color="#3c3c3c"/><stop offset="1" stop-color="#e0e0e0"/></linearGradient></defs>
<path d="M1590.8,69.2v5l-3.2,-2.5zM1594.8,69.2v5l-3.2,-2.5z" fill="#d0d0d0"/>
<rect x="1571" y="82" width="1" height="3.2" fill="#1a1a1a"/>
<rect x="1573" y="82" width="1" height="3.2" fill="#1a1a1a"/>
<rect x="1575" y="82" width="1" height="3.2" fill="#1a1a1a"/>
<rect x="1577" y="82" width="1" height="3.2" fill="#1a1a1a"/>
<rect x="1579" y="82" width="1" height="3.2" fill="#1a1a1a"/>
<rect x="1581" y="82" width="1" height="3.2" fill="#1a1a1a"/>
<rect x="1583" y="82" width="1" height="3.2" fill="#1a1a1a"/>
<rect x="1585" y="82" width="1" height="3.2" fill="#1a1a1a"/>
<rect x="1587" y="82" width="1" height="3.2" fill="#1a1a1a"/>
<rect x="1589" y="82" width="1" height="3.2" fill="#1a1a1a"/>
<rect x="1566.5" y="89.5" width="29" height="23" rx="2" fill="#323232" stroke="#2a2a2a"/>
<g transform="rotate(180 1581.4 101.9)"><path d="M1572,103c-0.6,-4.6 4,-7.8 9.4,-7.8c5.6,0 9.2,2.6 9,5.6c-0.2,2.6 -3,2.6 -4.4,2.4c-1.8,-0.2 -2.4,1.2 -1.4,2.4c1,1.4 -0.4,2.6 -3.2,2.6c-5,0 -8.8,-1.6 -9.4,-5.2z" fill="#cfcfcf"/></g>
<circle cx="1575.6" cy="103.6" r="1.35" fill="#3a3a3a"/>
<circle cx="1580.8" cy="105.4" r="1.35" fill="#3a3a3a"/>
<circle cx="1586" cy="103.4" r="1.35" fill="#3a3a3a"/>
<circle cx="1588" cy="99.6" r="1.35" fill="#3a3a3a"/>
<path d="M1573.6,137.4V120.4C1577,120.6 1580,121.6 1582.4,123.2Z" fill="#d6d6d6"/><path d="M1573.6,137.4L1582.4,123.2C1585,124.8 1587,127 1588.6,129.6Z" fill="#a2a2a2"/><path d="M1573.6,137.4L1588.6,129.6C1589.8,131.8 1590.4,134.4 1590.6,137.4Z" fill="#5e5e5e"/><path d="M1573.6,137.4V120.4C1583,121 1590,128 1590.6,137.4Z" fill="none" stroke="#c8c8c8" stroke-width="0.9"/>
<rect x="1573.4" y="152.4" width="4.6" height="4.6" fill="#262626"/>
<rect x="1578.8000000000002" y="152.4" width="4.6" height="4.6" fill="#5e5e5e"/>
<rect x="1584.2" y="152.4" width="4.6" height="4.6" fill="#8a8a8a"/>
<rect x="1573.4" y="157.8" width="4.6" height="4.6" fill="#7c7c7c"/>
<rect x="1578.8000000000002" y="157.8" width="4.6" height="4.6" fill="#6c6c6c"/>
<rect x="1584.2" y="157.8" width="4.6" height="4.6" fill="#9a9a9a"/>
<rect x="1572.6" y="151.6" width="17" height="11.4" fill="none" stroke="#c4c4c4" stroke-width="0.9"/><path d="M1578.4,152v10.6M1583.8,152v10.6M1573,157.3h16.2" stroke="#b8b8b8" stroke-width="0.8"/>
<ellipse cx="1575.4" cy="178.4" rx="1.5" ry="2.6" transform="rotate(-20 1575.4 178.4)" fill="#c8c8c8"/><ellipse cx="1588.2" cy="178.6" rx="1.6" ry="2.6" transform="rotate(35 1588.2 178.6)" fill="#c8c8c8"/><rect x="1577.4" y="186" width="8" height="7.6" fill="#cfcfcf"/><path d="M1578.6,186l-3.4,-8.4c-0.4,-1.6 1.2,-2 1.8,-0.8l3,9.2zM1581,186v-9.6c0.2,-1.6 1.8,-1.6 2,0v9.6zM1584,186l2.6,-8.4c0.6,-1.4 2.2,-0.8 1.8,0.6l-3,7.8z" fill="url(#dg)"/>
<circle cx="1581.4" cy="208.2" r="3.7" fill="url(#dg)"/><circle cx="1577.2" cy="213.8" r="3.7" fill="url(#dg)"/><circle cx="1585.6" cy="213.8" r="3.7" fill="url(#dg)"/><path d="M1580.4,212h2l1.6,7.6h-5.2z" fill="#bdbdbd"/>
<rect x="1562" y="229.5" width="38" height="1" fill="#2e2e2e"/><rect x="1562" y="230.5" width="38" height="1" fill="#565656"/>
<rect x="1571" y="235" width="1" height="3.2" fill="#1a1a1a"/>
<rect x="1573" y="235" width="1" height="3.2" fill="#1a1a1a"/>
<rect x="1575" y="235" width="1" height="3.2" fill="#1a1a1a"/>
<rect x="1577" y="235" width="1" height="3.2" fill="#1a1a1a"/>
<rect x="1579" y="235" width="1" height="3.2" fill="#1a1a1a"/>
<rect x="1581" y="235" width="1" height="3.2" fill="#1a1a1a"/>
<rect x="1583" y="235" width="1" height="3.2" fill="#1a1a1a"/>
<rect x="1585" y="235" width="1" height="3.2" fill="#1a1a1a"/>
<rect x="1587" y="235" width="1" height="3.2" fill="#1a1a1a"/>
<rect x="1589" y="235" width="1" height="3.2" fill="#1a1a1a"/>
<circle cx="1581.4" cy="254.4" r="7.4" fill="none" stroke="#d0d0d0" stroke-width="1.1" stroke-dasharray="2 1.4"/><circle cx="1581.4" cy="254.4" r="5" fill="url(#dg)"/>
<rect x="1576.4" y="276.4" width="12.6" height="11" fill="#4e4e4e" stroke="#d0d0d0" stroke-width="1.1"/><rect x="1573.6" y="283.2" width="7" height="6.6" fill="#8a8a8a" stroke="#d0d0d0" stroke-width="1"/><rect x="1575.6" y="285.2" width="3" height="2.6" fill="#ddd"/>
<rect x="1562" y="298.5" width="38" height="1" fill="#2e2e2e"/><rect x="1562" y="299.5" width="38" height="1" fill="#565656"/>
<rect x="1571" y="304.4" width="1" height="3.2" fill="#1a1a1a"/>
<rect x="1573" y="304.4" width="1" height="3.2" fill="#1a1a1a"/>
<rect x="1575" y="304.4" width="1" height="3.2" fill="#1a1a1a"/>
<rect x="1577" y="304.4" width="1" height="3.2" fill="#1a1a1a"/>
<rect x="1579" y="304.4" width="1" height="3.2" fill="#1a1a1a"/>
<rect x="1581" y="304.4" width="1" height="3.2" fill="#1a1a1a"/>
<rect x="1583" y="304.4" width="1" height="3.2" fill="#1a1a1a"/>
<rect x="1585" y="304.4" width="1" height="3.2" fill="#1a1a1a"/>
<rect x="1587" y="304.4" width="1" height="3.2" fill="#1a1a1a"/>
<rect x="1589" y="304.4" width="1" height="3.2" fill="#1a1a1a"/>
<rect x="1575" y="317.4" width="12.8" height="12.4" fill="#555" stroke="#d0d0d0" stroke-width="1.1" stroke-dasharray="2.4 1.4"/><rect x="1580.6" y="322.8" width="1.8" height="1.8" fill="#e8e8e8"/>
<rect x="1573.8" y="316.2" width="2.4" height="2.4" fill="#e2e2e2"/>
<rect x="1586.6" y="316.2" width="2.4" height="2.4" fill="#e2e2e2"/>
<rect x="1573.8" y="328.6" width="2.4" height="2.4" fill="#e2e2e2"/>
<rect x="1586.6" y="328.6" width="2.4" height="2.4" fill="#e2e2e2"/>
<path d="M1575.4,343.6v14.4" stroke="#d0d0d0" stroke-width="1.2"/><rect x="1577.2" y="345" width="7.6" height="4.6" fill="#c8c8c8"/><rect x="1577.2" y="352" width="11.6" height="4.8" fill="#a8a8a8"/>
<rect x="1574.6" y="372" width="9" height="9" fill="#c4c4c4"/><rect x="1579.8" y="377" width="9" height="9.4" fill="#9c9c9c"/><rect x="1579.8" y="377" width="3.8" height="4" fill="#4a4a4a" stroke="#ddd" stroke-width="0.8"/>
<rect x="1562" y="395.5" width="38" height="1" fill="#2e2e2e"/><rect x="1562" y="396.5" width="38" height="1" fill="#565656"/>
<rect x="1571" y="401.4" width="1" height="3.2" fill="#1a1a1a"/>
<rect x="1573" y="401.4" width="1" height="3.2" fill="#1a1a1a"/>
<rect x="1575" y="401.4" width="1" height="3.2" fill="#1a1a1a"/>
<rect x="1577" y="401.4" width="1" height="3.2" fill="#1a1a1a"/>
<rect x="1579" y="401.4" width="1" height="3.2" fill="#1a1a1a"/>
<rect x="1581" y="401.4" width="1" height="3.2" fill="#1a1a1a"/>
<rect x="1583" y="401.4" width="1" height="3.2" fill="#1a1a1a"/>
<rect x="1585" y="401.4" width="1" height="3.2" fill="#1a1a1a"/>
<rect x="1587" y="401.4" width="1" height="3.2" fill="#1a1a1a"/>
<rect x="1589" y="401.4" width="1" height="3.2" fill="#1a1a1a"/>
<path d="M1581.4,411.4l8.6,5l-8.6,5l-8.6,-5z" fill="#dedede"/><path d="M1572.8,421.2l2.8,-1.6l5.8,3.4l5.8,-3.4l2.8,1.6l-8.6,5z" fill="#9a9a9a"/>
<rect x="1572.8" y="439.6" width="10" height="13" fill="#4c4c4c" stroke="#d0d0d0" stroke-width="1.1"/><rect x="1577.6" y="446" width="12" height="10" fill="#555" stroke="#d0d0d0" stroke-width="1.1"/>
<rect x="1562" y="465.5" width="38" height="1" fill="#2e2e2e"/><rect x="1562" y="466.5" width="38" height="1" fill="#565656"/>
<rect x="1571" y="470.4" width="1" height="3.2" fill="#1a1a1a"/>
<rect x="1573" y="470.4" width="1" height="3.2" fill="#1a1a1a"/>
<rect x="1575" y="470.4" width="1" height="3.2" fill="#1a1a1a"/>
<rect x="1577" y="470.4" width="1" height="3.2" fill="#1a1a1a"/>
<rect x="1579" y="470.4" width="1" height="3.2" fill="#1a1a1a"/>
<rect x="1581" y="470.4" width="1" height="3.2" fill="#1a1a1a"/>
<rect x="1583" y="470.4" width="1" height="3.2" fill="#1a1a1a"/>
<rect x="1585" y="470.4" width="1" height="3.2" fill="#1a1a1a"/>
<rect x="1587" y="470.4" width="1" height="3.2" fill="#1a1a1a"/>
<rect x="1589" y="470.4" width="1" height="3.2" fill="#1a1a1a"/>
<rect x="1573" y="483" width="17" height="1.6" fill="#dcdcdc"/><rect x="1573" y="487" width="17" height="2.4" fill="#cfcfcf"/><rect x="1573" y="492" width="17" height="3.4" fill="#bdbdbd"/>
<rect x="1562" y="506.0" width="38" height="1" fill="#2e2e2e"/><rect x="1562" y="507.0" width="38" height="1" fill="#565656"/>
<rect x="1571" y="511.4" width="1" height="3.2" fill="#1a1a1a"/>
<rect x="1573" y="511.4" width="1" height="3.2" fill="#1a1a1a"/>
<rect x="1575" y="511.4" width="1" height="3.2" fill="#1a1a1a"/>
<rect x="1577" y="511.4" width="1" height="3.2" fill="#1a1a1a"/>
<rect x="1579" y="511.4" width="1" height="3.2" fill="#1a1a1a"/>
<rect x="1581" y="511.4" width="1" height="3.2" fill="#1a1a1a"/>
<rect x="1583" y="511.4" width="1" height="3.2" fill="#1a1a1a"/>
<rect x="1585" y="511.4" width="1" height="3.2" fill="#1a1a1a"/>
<rect x="1587" y="511.4" width="1" height="3.2" fill="#1a1a1a"/>
<rect x="1589" y="511.4" width="1" height="3.2" fill="#1a1a1a"/>
<rect x="1573.4" y="524.6" width="16" height="11" fill="url(#dgh)" stroke="#d0d0d0" stroke-width="1.1"/>
<rect x="1562" y="546.8" width="38" height="1" fill="#2e2e2e"/><rect x="1562" y="547.8" width="38" height="1" fill="#565656"/>
</svg>
<div id="taskbar" class="abs"></div>
<div class="abs" style="left:0;top:860px;width:1600px;height:40px;background:linear-gradient(100deg,#0b0b0b 0,#0b0b0b 62%,#161616 70%,#1e1e1e 76%,#141414 82%,#0c0c0c 88%,#0b0b0b 100%)"></div>
<svg class="abs" style="left:16px;top:872px" width="16" height="16" viewBox="0 0 16 16"><path d="M0,2.3L6.5,1.4V7.6H0ZM7.3,1.3L16,0V7.6H7.3ZM0,8.4H6.5V14.6L0,13.7ZM7.3,8.4H16V16L7.3,14.7Z" fill="#fff"/></svg>
<div class="abs" style="left:48px;top:860px;width:344px;height:40px;background:#f3f3f3"></div>
<div class="abs" style="left:57px;top:869.5px;width:22px;height:22px;border-radius:11px;border:2.6px solid #1e1e1e;box-shadow:0 0 1.5px #555, inset 0 0 1.5px #555"></div>
<span class="t" style="left:88.8px;top:873.2px;font-size:15.4px;letter-spacing:-0.49px;color:#2d2d2d;">Type here to search</span>
<svg class="abs" style="left:364px;top:871px" width="15" height="18" viewBox="0 0 15 18"><rect x="4.6" y="0.8" width="5.8" height="10" rx="1.6" fill="#3a3a3a"/><rect x="5.4" y="1.6" width="4.2" height="3.4" rx="1" fill="#8a8a8a"/><path d="M2.4,8.2v1.4a5.1,5.1 0 0 0 10.2,0V8.2M7.5,14.6v2.2M4.6,17h5.8" fill="none" stroke="#2e2e2e" stroke-width="1.2"/></svg>
<svg class="abs" style="left:406px;top:870px" width="20" height="20" viewBox="0 0 20 20"><path d="M2.2,1.6v2.4M2.2,1.6H12V4M2.2,18.4V16M2.2,18.4H12V16" fill="none" stroke="#fff" stroke-width="1.2"/><rect x="2.2" y="6" width="9.8" height="8" fill="none" stroke="#fff" stroke-width="1.3"/><path d="M15.6,4v1.6M15.6,7v6.6M15.6,14.8v1.4" stroke="#fff" stroke-width="1.6"/></svg>
<svg class="abs" style="left:456px;top:869px" width="23" height="23" viewBox="0 0 23 23"><path d="M1.4,10.6C2.4,4.6 6.8,1.2 11.8,1.2c5.8,0 9.8,4.2 9.8,10v2.4H8c0.2,3 2.6,4.6 5.8,4.6c2.4,0 4.6,-0.8 6.4,-1.8v4.2c-2,1.2 -4.6,1.8 -7.4,1.8c-5.8,0 -9.6,-3.6 -9.6,-9c0,-3.2 1.6,-5.8 4.2,-7.2C5.2,7.2 2.6,8.2 1.4,10.6ZM8.2,9.6h8.2c-0.2,-2.6 -1.6,-4.2 -4,-4.2c-2.2,0 -3.8,1.6 -4.2,4.2Z" fill="#1e8ae6"/></svg>
<svg class="abs" style="left:504px;top:869px" width="24" height="22" viewBox="0 0 24 22"><path d="M1,3.4c0,-0.8 0.6,-1.4 1.4,-1.4h6l2,2.4H21.6c0.8,0 1.4,0.6 1.4,1.4V18H1Z" fill="#f4c14a"/><rect x="1" y="6.6" width="22" height="12.4" fill="#fbd877"/><path d="M5,12.4H19V20H15V15.8H9V20H5Z" fill="#4aa3e8"/><rect x="1" y="19" width="22" height="1.6" fill="#e0a92f"/></svg>
<svg class="abs" style="left:553px;top:867px" width="24" height="25" viewBox="0 0 24 25"><path d="M8,8.4V5.6c0,-2.2 1.8,-3.6 4,-3.6s4,1.4 4,3.6v2.8" fill="none" stroke="#ddd" stroke-width="1.3"/><path d="M0.8,8H23.2V22.6c0,0.8 -0.6,1.4 -1.4,1.4H2.2c-0.8,0 -1.4,-0.6 -1.4,-1.4Z" fill="#f4f4f4"/><rect x="6.8" y="11" width="4.6" height="4.6" fill="#f25022"/><rect x="12.4" y="11" width="4.6" height="4.6" fill="#7fba00"/><rect x="6.8" y="16.6" width="4.6" height="4.6" fill="#00a4ef"/><rect x="12.4" y="16.6" width="4.6" height="4.6" fill="#ffb900"/></svg>
<svg class="abs" style="left:601px;top:869px" width="26" height="21" viewBox="0 0 26 21"><path d="M0.6,8.2L13,0.8L25.4,8.2V20.2H0.6Z" fill="#fff"/><path d="M4.4,9.4L24,9.4L13.6,16.6Z" fill="#111"/><path d="M4.4,9.4L13.6,16.6L14.6,15.6L9,9.4Z" fill="#fff" opacity="0"/><path d="M13.4,16.4L24.4,9.6V19.4Z" fill="#fff"/></svg>
<svg class="abs" style="left:651px;top:868px" width="24" height="24" viewBox="0 0 24 24"><circle cx="12" cy="12" r="11.4" fill="#de4a3c"/><path d="M12,12L2.1,6.3A11.4,11.4 0 0 0 9.6,23.1Z" fill="#1da462"/><path d="M12,12L9.6,23.1A11.4,11.4 0 0 0 22.6,7.8H12Z" fill="#fcc934"/><path d="M2.1,6.3A11.4,11.4 0 0 1 22.6,7.8H12Z" fill="#de4a3c"/><circle cx="12" cy="12" r="5.2" fill="#f4f4f4"/><circle cx="12" cy="12" r="4.1" fill="#4a8af4"/></svg>
<svg class="abs" style="left:700px;top:868px" width="24" height="24" viewBox="0 0 24 24"><circle cx="12" cy="12" r="11.6" fill="#6fb23c"/><circle cx="12" cy="12" r="11.6" fill="none" stroke="#4e8a26" stroke-width="0.8"/><path d="M7.2,6.4v8c0,2.6 1.4,3.8 3.4,3.8c1.4,0 2.4,-0.6 3,-1.6v1.2c0,1 1.4,1.6 3.4,0.8c-0.6,-0.4 -0.8,-1 -0.8,-1.8V6.4h-2.8v7.4c0,1.4 -0.8,2.2 -1.8,2.2s-1.6,-0.6 -1.6,-2V6.4Z" fill="#fff"/></svg>
<svg class="abs" style="left:751px;top:871px" width="20" height="19" viewBox="0 0 20 19"><path d="M0.6,0.6H19.4V9.4L9.8,18.4H0.6Z" fill="#fff"/><path d="M19.4,9.6V18.4H10Z" fill="#fff"/><path d="M10.2,18.2L19.2,9.8H11.6c-0.8,0 -1.4,0.6 -1.4,1.4Z" fill="#151515"/></svg>
<svg class="abs" style="left:798px;top:868px" width="24" height="24" viewBox="0 0 24 24"><circle cx="12" cy="12" r="11.6" fill="#1ed760"/><path d="M5.4,8.6c4.6,-1.4 9.6,-1 13.6,1.2" fill="none" stroke="#111" stroke-width="2.3" stroke-linecap="round"/><path d="M6.2,12.6c3.8,-1.1 7.8,-0.7 11.2,1.2" fill="none" stroke="#111" stroke-width="1.9" stroke-linecap="round"/><path d="M7,16.2c3,-0.8 6,-0.5 8.8,1" fill="none" stroke="#111" stroke-width="1.6" stroke-linecap="round"/></svg>
<div class="abs" style="left:834.5px;top:860px;width:48.5px;height:40px;background:#3d3d3d"></div>
<div class="abs" style="left:848px;top:869.5px;width:21.5px;height:21px;background:#261300;border:1.8px solid #f29b2c"></div>
<span class="t" style="left:852.0px;top:875.3px;font-size:12.6px;letter-spacing:0.50px;color:#f6a335;font-weight:bold;">Ai</span>
<div class="abs" style="left:496px;top:898px;width:40px;height:2px;background:#76b9ed"></div>
<div class="abs" style="left:643.5px;top:898px;width:39.0px;height:2px;background:#76b9ed"></div>
<div class="abs" style="left:692px;top:898px;width:39.5px;height:2px;background:#76b9ed"></div>
<div class="abs" style="left:740.5px;top:898px;width:40.0px;height:2px;background:#76b9ed"></div>
<div class="abs" style="left:790px;top:898px;width:40px;height:2px;background:#76b9ed"></div>
<div class="abs" style="left:834.5px;top:898px;width:48.5px;height:2px;background:#76b9ed"></div>
<svg class="abs" style="left:1379px;top:871px" width="17" height="17" viewBox="0 0 17 17"><circle cx="10.6" cy="4" r="2.8" fill="none" stroke="#fff" stroke-width="1.2"/><path d="M6.6,11.4c0.4,-2.6 2,-4 4,-4s3.6,1.4 4,4" fill="none" stroke="#fff" stroke-width="1.2"/><circle cx="4.8" cy="8.6" r="2.5" fill="#0e0e0e" stroke="#fff" stroke-width="1.2"/><path d="M1,16.2c0.4,-2.8 1.8,-4.4 3.8,-4.4s3.4,1.6 3.8,4.4" fill="none" stroke="#fff" stroke-width="1.2"/></svg>
<svg class="abs" style="left:1416px;top:875px" width="14" height="10" viewBox="0 0 14 10"><path d="M1.2,8.2L7,2.2L12.8,8.2" fill="none" stroke="#fff" stroke-width="1.4"/></svg>
<svg class="abs" style="left:1438px;top:872px" width="18" height="16" viewBox="0 0 18 16"><rect x="3.4" y="2.2" width="13.2" height="9.2" fill="none" stroke="#fff" stroke-width="1.2"/><rect x="1" y="1.4" width="4.6" height="3.6" fill="#0e0e0e" stroke="#fff" stroke-width="1"/><path d="M3.3,5v9.4M10,11.6v2.6M6.4,14.4h7" stroke="#fff" stroke-width="1.2"/></svg>
<svg class="abs" style="left:1462px;top:872px" width="18" height="16" viewBox="0 0 18 16"><path d="M1,5.6h2.8L7.2,2.2v11.6L3.8,10.4H1Z" fill="none" stroke="#fff" stroke-width="1.1"/><path d="M9.6,5.4c1.2,1.4 1.2,3.8 0,5.2M11.8,3.6c2.2,2.4 2.2,6.4 0,8.8M14,1.8c3.2,3.4 3.2,9 0,12.4" fill="none" stroke="#fff" stroke-width="1.1"/></svg>
<span class="t" style="left:1492.7px;top:865.4px;font-size:11.6px;letter-spacing:0.03px;color:#fff;">2:12 AM</span>
<span class="t" style="left:1489.3px;top:882.8px;font-size:11.6px;letter-spacing:-0.02px;color:#fff;">5/17/2018</span>
<svg class="abs" style="left:1557px;top:870px" width="28" height="28" viewBox="1557 870 28 28"><path d="M1559,872H1575V884H1565.6L1562.4,887.4V884H1559Z" fill="#fff"/><path d="M1561.6,875.2h10.8M1561.6,877.8h10.8M1561.6,880.4h10.8" stroke="#111" stroke-width="1"/><circle cx="1574.4" cy="887.4" r="7.4" fill="#2a2a2a" stroke="#8a8a8a" stroke-width="1.1"/><text x="1571.6" y="891.4" font-family="Liberation Sans,sans-serif" font-size="10.5" font-weight="bold" fill="#fff">1</text></svg>
<div class="abs" style="left:1596px;top:864px;width:1px;height:36px;background:#555"></div>
</div>
</body>
</html>
